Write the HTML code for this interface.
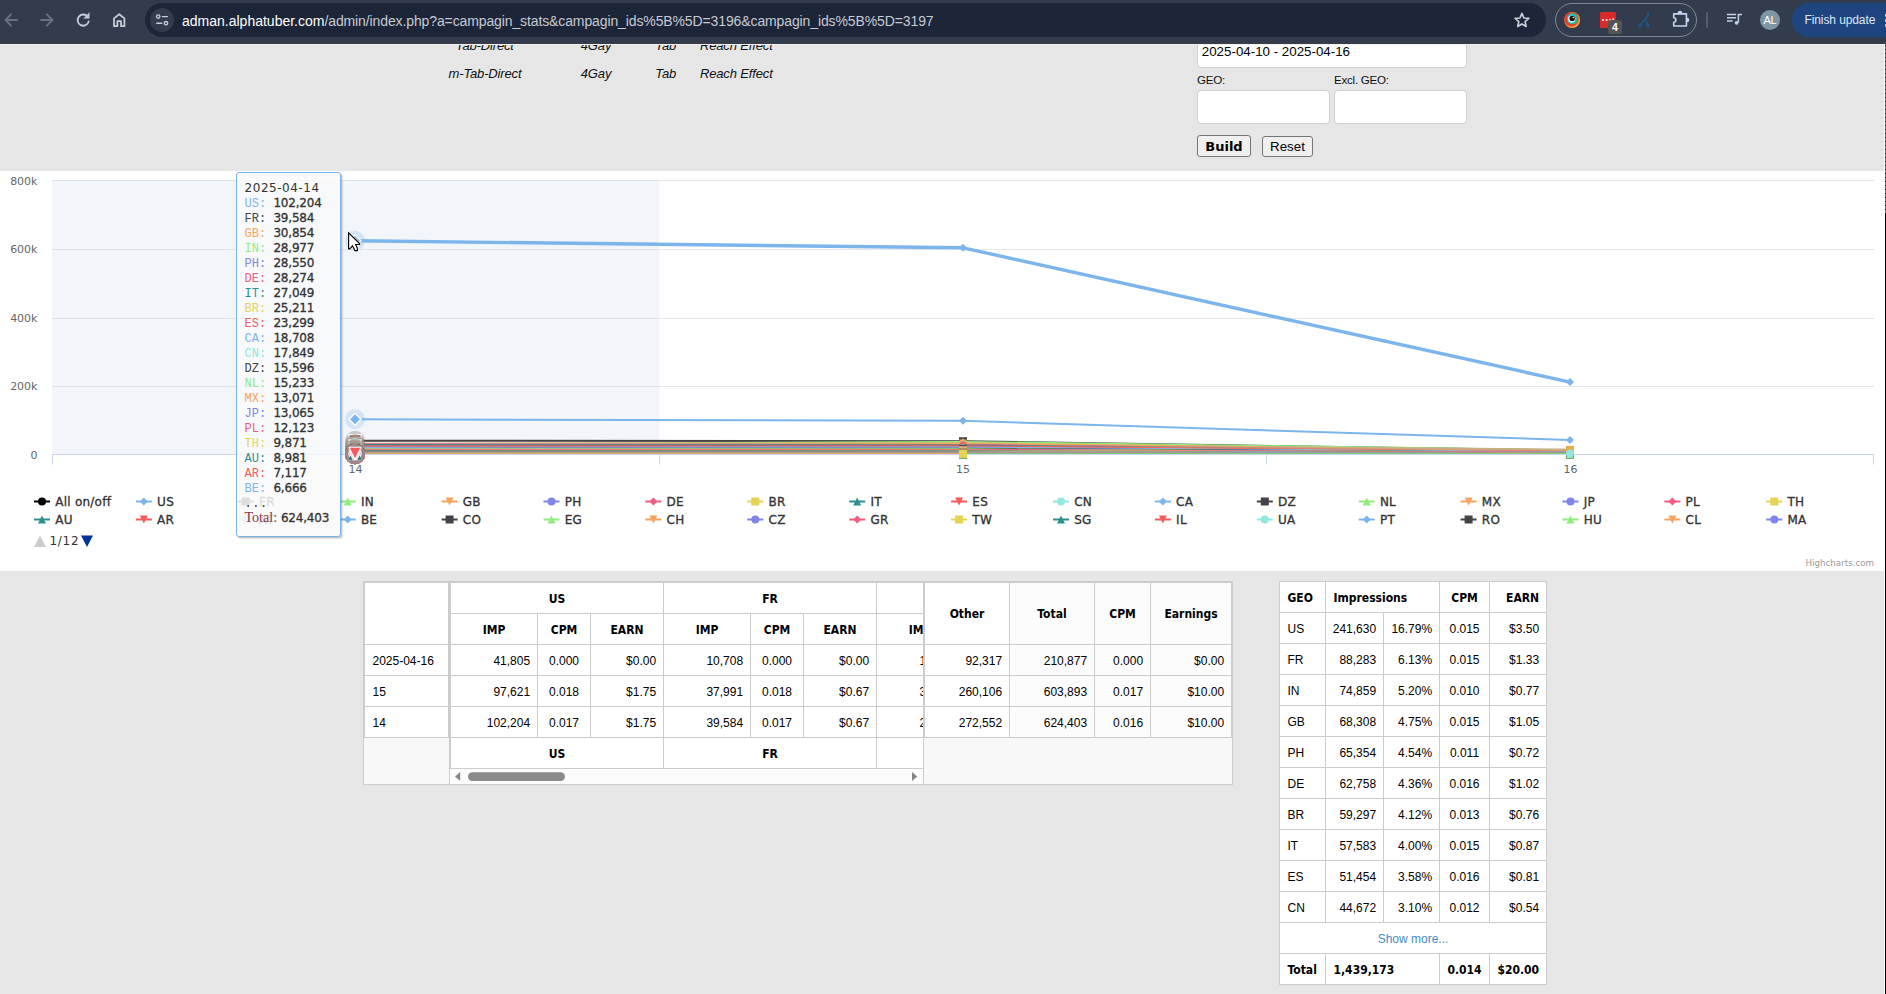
<!DOCTYPE html>
<html lang="en">
<head>
<meta charset="utf-8">
<title>Campaign stats</title>
<style>
html,body{margin:0;padding:0;}
body{width:1886px;height:994px;overflow:hidden;position:relative;background:#e6e6e6;font-family:"Liberation Sans",sans-serif;font-size:12px;color:#000;}
.abs{position:absolute;}
/* ---------- browser toolbar ---------- */
#tb{position:absolute;left:0;top:0;width:1886px;height:44px;background:#333c4c;z-index:50;}
#tb .line{position:absolute;left:0;top:43px;width:1886px;height:1px;background:#3a3d48;}
#url{position:absolute;left:145px;top:3px;width:1401px;height:34px;border-radius:17px;background:#1d2538;}
#tune{position:absolute;left:5px;top:5px;width:24px;height:24px;border-radius:12px;background:#333c4c;}
#urltxt{position:absolute;left:37px;top:0.7px;height:34px;line-height:34px;font-size:14px;color:#c6cad3;white-space:nowrap;letter-spacing:-0.115px;}
#urltxt b{font-weight:normal;color:#ffffff;letter-spacing:0;}
#extg{position:absolute;left:1555px;top:3px;width:140px;height:32px;border:1px solid #828791;border-radius:17px;}
#fin{position:absolute;left:1792px;top:3px;width:120px;height:34px;border-radius:17px;background:#1f4580;color:#dde6f6;font-size:12px;line-height:34px;letter-spacing:-0.1px;}
#fin span{position:absolute;left:12.5px;top:-0.2px;white-space:nowrap;}
#av{position:absolute;left:1760px;top:10px;width:20px;height:20px;border-radius:10px;background:#7e97a4;color:#fff;font-size:11px;line-height:20px;text-align:center;letter-spacing:-0.3px;}
/* ---------- page header ---------- */
.it{position:absolute;font-style:italic;font-size:13px;letter-spacing:-0.15px;line-height:16px;color:#111;white-space:nowrap;transform:translateX(-50%);}
.inp{position:absolute;background:#fff;border:1px solid #cfcfcf;border-radius:4px;box-sizing:border-box;}
.lbl{position:absolute;font-size:11.6px;letter-spacing:-0.25px;line-height:14px;color:#111;white-space:nowrap;}
.btn{position:absolute;box-sizing:border-box;border:1px solid #767676;border-radius:3px;background:#efefef;text-align:center;white-space:nowrap;color:#000;}
/* ---------- chart ---------- */
#chart{position:absolute;left:0;top:171px;width:1884px;height:400px;background:#fff;overflow:hidden;}
#chart svg{position:absolute;left:0;top:0;}
.lg{font-family:"DejaVu Sans","Liberation Sans",sans-serif;font-size:12px;fill:#333333;stroke:#333333;stroke-width:0.32px;letter-spacing:0.25px;}
.nav{font-family:"DejaVu Sans","Liberation Sans",sans-serif;font-size:12px;fill:#333333;letter-spacing:0.7px;}
.axl{font-family:"DejaVu Sans","Liberation Sans",sans-serif;font-size:11px;fill:#666666;}
.cred{font-family:"DejaVu Sans","Liberation Sans",sans-serif;font-size:8.7px;fill:#999999;}
/* ---------- tooltip ---------- */
#tt{position:absolute;left:236px;top:172px;width:103px;height:363px;border:1px solid #7cb5ec;border-radius:3px;background:rgba(249,249,249,0.85);box-shadow:1px 1px 1px rgba(0,0,0,0.18),2px 2px 2px rgba(0,0,0,0.10);z-index:20;font-family:"DejaVu Sans","Liberation Sans",sans-serif;font-size:12px;color:#333333;}
#tt .in{position:absolute;left:7.6px;top:7.6px;}
.tr{height:15px;line-height:15px;white-space:pre;}
.tr b{font-weight:normal;-webkit-text-stroke:0.3px #333333;letter-spacing:-0.2px;}
.tr.d{letter-spacing:0.52px;}
.mono{font-family:"Liberation Mono",monospace;font-size:12px;}
.ser{font-family:"Liberation Serif",serif;font-size:14.1px;color:#8b3548;}
.tr.tot{position:relative;top:-1px;left:-0.2px;}
/* ---------- tables ---------- */
.r{position:absolute;}
.c{position:absolute;box-sizing:border-box;font-family:"Liberation Sans",sans-serif;font-size:12px;color:#000;white-space:nowrap;}
.c.b{font-family:"DejaVu Sans Condensed","Liberation Sans",sans-serif;font-weight:bold;}
.c.lnk{color:#428bca;}
</style>
</head>
<body>

<!-- ================= browser toolbar ================= -->
<div id="tb">
  <div class="line"></div>
  <svg class="abs" style="left:0;top:0" width="140" height="44" viewBox="0 0 140 44" fill="none" stroke-linecap="round" stroke-linejoin="round">
    <!-- back -->
    <path d="M17 20H6M11 14.5L5.5 20L11 25.5" stroke="#697080" stroke-width="1.8"/>
    <!-- forward -->
    <path d="M41 20H52M47 14.5L52.5 20L47 25.5" stroke="#697080" stroke-width="1.8"/>
    <!-- reload -->
    <path d="M87.6 16.6A5.6 5.6 0 1 0 88.7 21.4" stroke="#c6cbd6" stroke-width="1.8"/>
    <path d="M89.2 13.2V18.2H84.2Z" fill="#c6cbd6" stroke="#c6cbd6" stroke-width="0.6"/>
    <!-- home -->
    <path d="M114 26.2V18.4L119.2 14.2L124.4 18.4V26.2H121V21.2H117.4V26.2Z" stroke="#c6cbd6" stroke-width="1.8"/>
  </svg>
  <div id="url">
    <div id="tune"></div>
    <svg class="abs" style="left:5px;top:5px" width="24" height="24" viewBox="0 0 24 24" fill="none" stroke="#c6cbd6" stroke-width="1.4" stroke-linecap="round">
      <circle cx="8.2" cy="8.6" r="1.7"/><path d="M12.4 8.6H17.4"/>
      <circle cx="16" cy="15.2" r="1.7"/><path d="M6.8 15.2H11.8"/>
    </svg>
    <div id="urltxt"><b>adman.alphatuber.com</b>/admin/index.php?a=campagin_stats&amp;campagin_ids%5B%5D=3196&amp;campagin_ids%5B%5D=3197</div>
    <!-- star -->
    <svg class="abs" style="left:1368px;top:8px" width="18" height="18" viewBox="0 0 18 18" fill="none" stroke="#c8ccd6" stroke-width="1.7" stroke-linejoin="round">
      <path d="M8.95 2.45L10.89 6.98L15.80 7.43L12.09 10.67L13.18 15.47L8.95 12.95L4.72 15.47L5.81 10.67L2.10 7.43L7.01 6.98Z"/>
    </svg>
  </div>
  <div id="extg"></div>
  <!-- extension icons -->
  <svg class="abs" style="left:1556px;top:4px" width="140" height="34" viewBox="0 0 140 34">
    <!-- browserstack-like eye -->
    <defs><linearGradient id="eg" x1="0" y1="0" x2="1" y2="1"><stop offset="0" stop-color="#ee6a2e"/><stop offset="1" stop-color="#fbb040"/></linearGradient></defs>
    <circle cx="16.1" cy="16.0" r="8" fill="url(#eg)"/>
    <circle cx="15.5" cy="15.3" r="7.1" fill="#e73c2e"/>
    <circle cx="16.5" cy="14.7" r="5.7" fill="#3fb54a"/>
    <circle cx="15.9" cy="14.8" r="4.8" fill="#23b5e8"/>
    <circle cx="15.6" cy="15.1" r="3.7" fill="#c7ecf8"/>
    <circle cx="16.2" cy="14.4" r="2.65" fill="#230b06"/>
    <circle cx="17.2" cy="13.5" r="0.75" fill="#ffffff"/>
    <!-- red ext -->
    <rect x="44" y="8" width="16" height="16" rx="1.5" fill="#d92a2a"/>
    <circle cx="47" cy="16" r="1" fill="#fff"/><circle cx="50.6" cy="16" r="1" fill="#fff"/><circle cx="54" cy="16" r="1" fill="#fff"/><rect x="56.6" y="14" width="1.2" height="3" fill="#fff"/>
    <rect x="52" y="16" width="14" height="14" rx="3" fill="#555555"/>
    <text x="59" y="27.3" text-anchor="middle" font-family="Liberation Sans, sans-serif" font-weight="bold" font-size="10.5" fill="#ffffff">4</text>
    <!-- split icon -->
    <path d="M92.2 8.8V10.6C92.2 12.8 91 13.6 84.6 20" fill="none" stroke="#1d5a80" stroke-width="1.7" stroke-linecap="round"/>
    <path d="M90.2 17.6L91.8 20.8" fill="none" stroke="#1d5a80" stroke-width="1.7" stroke-linecap="round"/>
    <path d="M81.4 20.6H86.6L84 24Z M89.2 20.6H94.4L91.8 24Z" fill="#1d5a80"/>
    <!-- puzzle -->
    <path d="M117.7 9.9H130.4V22H117.7V18.2C120.6 18.2 120.6 13.8 117.7 13.8Z" fill="none" stroke="#c5d3ee" stroke-width="1.6" stroke-linejoin="round"/>
    <path d="M121.6 9.4A2.4 2.6 0 0 1 126.4 9.4Z M130.9 13.8A2.4 2.3 0 0 1 130.9 18.4Z" fill="#c5d3ee"/>
  </svg>
  <div class="abs" style="left:1706px;top:12px;width:2px;height:16px;border-radius:1px;background:#565d6e;"></div>
  <!-- media icon -->
  <svg class="abs" style="left:1725px;top:11px" width="20" height="18" viewBox="0 0 20 18" fill="none" stroke="#c5cfe6" stroke-width="1.5">
    <path d="M2 3.6H11M2 6.8H11M2 10H7.6"/>
    <path d="M13.4 11.6V3.4H17"/>
    <circle cx="11.6" cy="11.8" r="1.9" fill="#c5cfe6" stroke="none"/>
  </svg>
  <div id="av">AL</div>
  <div id="fin"><span>Finish update</span></div>
  <div class="abs" style="left:1884.5px;top:14px;width:3px;height:3px;border-radius:2px;background:#dde6f6;"></div>
  <div class="abs" style="left:1884.5px;top:19px;width:3px;height:3px;border-radius:2px;background:#dde6f6;"></div>
  <div class="abs" style="left:1884.5px;top:24px;width:3px;height:3px;border-radius:2px;background:#dde6f6;"></div>
</div>

<!-- ================= page header bits ================= -->
<div class="it" style="left:484.8px;top:37.5px;">Tab-Direct</div>
<div class="it" style="left:596px;top:37.5px;">4Gay</div>
<div class="it" style="left:665.7px;top:37.5px;">Tab</div>
<div class="it" style="left:736.3px;top:37.5px;">Reach Effect</div>
<div class="it" style="left:485px;top:65.5px;">m-Tab-Direct</div>
<div class="it" style="left:596px;top:65.5px;">4Gay</div>
<div class="it" style="left:665.7px;top:65.5px;">Tab</div>
<div class="it" style="left:736.3px;top:65.5px;">Reach Effect</div>

<div class="inp" style="left:1197px;top:35px;width:270px;height:33px;"><span class="abs" style="left:3.8px;top:8px;font-size:13.33px;line-height:15px;white-space:nowrap;">2025-04-10 - 2025-04-16</span></div>
<div class="lbl" style="left:1197px;top:72.5px;">GEO:</div>
<div class="lbl" style="left:1334px;top:72.5px;">Excl. GEO:</div>
<div class="inp" style="left:1197px;top:90px;width:133px;height:34px;"></div>
<div class="inp" style="left:1334px;top:90px;width:133px;height:34px;"></div>
<div class="btn" style="left:1197px;top:135px;width:54px;height:22px;font-family:'DejaVu Sans','Liberation Sans',sans-serif;font-weight:bold;font-size:13px;line-height:22px;">Build</div>
<div class="btn" style="left:1262px;top:136px;width:51px;height:21px;font-size:13.33px;line-height:19px;">Reset</div>

<!-- ================= chart ================= -->
<div id="chart">
<svg width="1884" height="400" viewBox="0 0 1884 400">
<defs><clipPath id="pc"><rect x="0" y="9" width="1884" height="274"/></clipPath></defs>
<path d="M52 9.5H1874" stroke="#e6e6e6" stroke-width="1"/>
<path d="M52 78.5H1874" stroke="#e6e6e6" stroke-width="1"/>
<path d="M52 147.5H1874" stroke="#e6e6e6" stroke-width="1"/>
<path d="M52 215.5H1874" stroke="#e6e6e6" stroke-width="1"/>
<rect x="52" y="9" width="607.3" height="274" fill="rgba(204,214,235,0.25)"/>
<path d="M52 283.5H1874" stroke="#ccd6eb" stroke-width="1"/>
<path d="M52.5 283.5V293.5" stroke="#ccd6eb" stroke-width="1"/>
<path d="M659.5 283.5V293.5" stroke="#ccd6eb" stroke-width="1"/>
<path d="M1266.5 283.5V293.5" stroke="#ccd6eb" stroke-width="1"/>
<path d="M1873.5 283.5V293.5" stroke="#ccd6eb" stroke-width="1"/>
<path clip-path="url(#pc)" d="M355.0 248.3 L963.0 249.8 L1570.0 268.9" fill="none" stroke="#7cb5ec" stroke-width="2" stroke-linejoin="round" stroke-linecap="round"/>
<circle cx="355.0" cy="248.3" r="10" fill="#7cb5ec" fill-opacity="0.25"/>
<path d="M355.0 242.3L361.0 248.3L355.0 254.3L349.0 248.3Z" fill="#7cb5ec" stroke="#ffffff" stroke-width="1.3"/>
<path d="M963.0 245.8L967.0 249.8L963.0 253.8L959.0 249.8Z" fill="#7cb5ec"/>
<path d="M1570.0 264.9L1574.0 268.9L1570.0 272.9L1566.0 268.9Z" fill="#7cb5ec"/>
<path clip-path="url(#pc)" d="M355.0 269.7 L963.0 270.2 L1570.0 279.5" fill="none" stroke="#434348" stroke-width="2" stroke-linejoin="round" stroke-linecap="round"/>
<circle cx="355.0" cy="269.7" r="10" fill="#434348" fill-opacity="0.25"/>
<path d="M349.0 263.7L361.0 263.7L361.0 275.7L349.0 275.7Z" fill="#434348" stroke="#ffffff" stroke-width="1.3"/>
<path d="M959.0 266.2L967.0 266.2L967.0 274.2L959.0 274.2Z" fill="#434348"/>
<path d="M1566.0 275.5L1574.0 275.5L1574.0 283.5L1566.0 283.5Z" fill="#434348"/>
<path clip-path="url(#pc)" d="M355.0 273.3 L963.0 270.9 L1570.0 279.2" fill="none" stroke="#90ed7d" stroke-width="2" stroke-linejoin="round" stroke-linecap="round"/>
<circle cx="355.0" cy="273.3" r="10" fill="#90ed7d" fill-opacity="0.25"/>
<path d="M355.0 267.3L361.0 279.3L349.0 279.3Z" fill="#90ed7d" stroke="#ffffff" stroke-width="1.3"/>
<path d="M963.0 266.9L967.0 274.9L959.0 274.9Z" fill="#90ed7d"/>
<path d="M1570.0 275.2L1574.0 283.2L1566.0 283.2Z" fill="#90ed7d"/>
<path clip-path="url(#pc)" d="M355.0 272.7 L963.0 272.4 L1570.0 279.9" fill="none" stroke="#f7a35c" stroke-width="2" stroke-linejoin="round" stroke-linecap="round"/>
<circle cx="355.0" cy="272.7" r="10" fill="#f7a35c" fill-opacity="0.25"/>
<path d="M349.0 266.7L361.0 266.7L355.0 278.7Z" fill="#f7a35c" stroke="#ffffff" stroke-width="1.3"/>
<path d="M959.0 268.4L967.0 268.4L963.0 276.4Z" fill="#f7a35c"/>
<path d="M1566.0 275.9L1574.0 275.9L1570.0 283.9Z" fill="#f7a35c"/>
<path clip-path="url(#pc)" d="M355.0 273.4 L963.0 274.1 L1570.0 280.3" fill="none" stroke="#8085e9" stroke-width="2" stroke-linejoin="round" stroke-linecap="round"/>
<circle cx="355.0" cy="273.4" r="10" fill="#8085e9" fill-opacity="0.25"/>
<circle cx="355.0" cy="273.4" r="6" fill="#8085e9" stroke="#ffffff" stroke-width="1.3"/>
<circle cx="963.0" cy="274.1" r="4" fill="#8085e9"/>
<circle cx="1570.0" cy="280.3" r="4" fill="#8085e9"/>
<path clip-path="url(#pc)" d="M355.0 273.5 L963.0 274.1 L1570.0 280.9" fill="none" stroke="#f15c80" stroke-width="2" stroke-linejoin="round" stroke-linecap="round"/>
<circle cx="355.0" cy="273.5" r="10" fill="#f15c80" fill-opacity="0.25"/>
<path d="M355.0 267.5L361.0 273.5L355.0 279.5L349.0 273.5Z" fill="#f15c80" stroke="#ffffff" stroke-width="1.3"/>
<path d="M963.0 270.1L967.0 274.1L963.0 278.1L959.0 274.1Z" fill="#f15c80"/>
<path d="M1570.0 276.9L1574.0 280.9L1570.0 284.9L1566.0 280.9Z" fill="#f15c80"/>
<path clip-path="url(#pc)" d="M355.0 274.6 L963.0 274.7 L1570.0 280.0" fill="none" stroke="#e4d354" stroke-width="2" stroke-linejoin="round" stroke-linecap="round"/>
<circle cx="355.0" cy="274.6" r="10" fill="#e4d354" fill-opacity="0.25"/>
<path d="M349.0 268.6L361.0 268.6L361.0 280.6L349.0 280.6Z" fill="#e4d354" stroke="#ffffff" stroke-width="1.3"/>
<path d="M959.0 270.7L967.0 270.7L967.0 278.7L959.0 278.7Z" fill="#e4d354"/>
<path d="M1566.0 276.0L1574.0 276.0L1574.0 284.0L1566.0 284.0Z" fill="#e4d354"/>
<path clip-path="url(#pc)" d="M355.0 274.0 L963.0 274.5 L1570.0 280.8" fill="none" stroke="#2b908f" stroke-width="2" stroke-linejoin="round" stroke-linecap="round"/>
<circle cx="355.0" cy="274.0" r="10" fill="#2b908f" fill-opacity="0.25"/>
<path d="M355.0 268.0L361.0 280.0L349.0 280.0Z" fill="#2b908f" stroke="#ffffff" stroke-width="1.3"/>
<path d="M963.0 270.5L967.0 278.5L959.0 278.5Z" fill="#2b908f"/>
<path d="M1570.0 276.8L1574.0 284.8L1566.0 284.8Z" fill="#2b908f"/>
<path clip-path="url(#pc)" d="M355.0 275.2 L963.0 275.2 L1570.0 280.1" fill="none" stroke="#f45b5b" stroke-width="2" stroke-linejoin="round" stroke-linecap="round"/>
<circle cx="355.0" cy="275.2" r="10" fill="#f45b5b" fill-opacity="0.25"/>
<path d="M349.0 269.2L361.0 269.2L355.0 281.2Z" fill="#f45b5b" stroke="#ffffff" stroke-width="1.3"/>
<path d="M959.0 271.2L967.0 271.2L963.0 279.2Z" fill="#f45b5b"/>
<path d="M1566.0 276.1L1574.0 276.1L1570.0 284.1Z" fill="#f45b5b"/>
<path clip-path="url(#pc)" d="M355.0 277.1 L963.0 277.1 L1570.0 281.4" fill="none" stroke="#91e8e1" stroke-width="2" stroke-linejoin="round" stroke-linecap="round"/>
<circle cx="355.0" cy="277.1" r="10" fill="#91e8e1" fill-opacity="0.25"/>
<circle cx="355.0" cy="277.1" r="6" fill="#91e8e1" stroke="#ffffff" stroke-width="1.3"/>
<circle cx="963.0" cy="277.1" r="4" fill="#91e8e1"/>
<circle cx="1570.0" cy="281.4" r="4" fill="#91e8e1"/>
<path clip-path="url(#pc)" d="M355.0 276.8 L963.0 276.5 L1570.0 281.7" fill="none" stroke="#7cb5ec" stroke-width="2" stroke-linejoin="round" stroke-linecap="round"/>
<circle cx="355.0" cy="276.8" r="10" fill="#7cb5ec" fill-opacity="0.25"/>
<path d="M355.0 270.8L361.0 276.8L355.0 282.8L349.0 276.8Z" fill="#7cb5ec" stroke="#ffffff" stroke-width="1.3"/>
<path d="M963.0 272.5L967.0 276.5L963.0 280.5L959.0 276.5Z" fill="#7cb5ec"/>
<path d="M1570.0 277.7L1574.0 281.7L1570.0 285.7L1566.0 281.7Z" fill="#7cb5ec"/>
<path clip-path="url(#pc)" d="M355.0 277.9 L963.0 277.7 L1570.0 281.7" fill="none" stroke="#434348" stroke-width="2" stroke-linejoin="round" stroke-linecap="round"/>
<circle cx="355.0" cy="277.9" r="10" fill="#434348" fill-opacity="0.25"/>
<path d="M349.0 271.9L361.0 271.9L361.0 283.9L349.0 283.9Z" fill="#434348" stroke="#ffffff" stroke-width="1.3"/>
<path d="M959.0 273.7L967.0 273.7L967.0 281.7L959.0 281.7Z" fill="#434348"/>
<path d="M1566.0 277.7L1574.0 277.7L1574.0 285.7L1566.0 285.7Z" fill="#434348"/>
<path clip-path="url(#pc)" d="M355.0 278.0 L963.0 278.3 L1570.0 281.9" fill="none" stroke="#90ed7d" stroke-width="2" stroke-linejoin="round" stroke-linecap="round"/>
<circle cx="355.0" cy="278.0" r="10" fill="#90ed7d" fill-opacity="0.25"/>
<path d="M355.0 272.0L361.0 284.0L349.0 284.0Z" fill="#90ed7d" stroke="#ffffff" stroke-width="1.3"/>
<path d="M963.0 274.3L967.0 282.3L959.0 282.3Z" fill="#90ed7d"/>
<path d="M1570.0 277.9L1574.0 285.9L1566.0 285.9Z" fill="#90ed7d"/>
<path clip-path="url(#pc)" d="M355.0 278.7 L963.0 278.9 L1570.0 281.6" fill="none" stroke="#f7a35c" stroke-width="2" stroke-linejoin="round" stroke-linecap="round"/>
<circle cx="355.0" cy="278.7" r="10" fill="#f7a35c" fill-opacity="0.25"/>
<path d="M349.0 272.7L361.0 272.7L355.0 284.7Z" fill="#f7a35c" stroke="#ffffff" stroke-width="1.3"/>
<path d="M959.0 274.9L967.0 274.9L963.0 282.9Z" fill="#f7a35c"/>
<path d="M1566.0 277.6L1574.0 277.6L1570.0 285.6Z" fill="#f7a35c"/>
<path clip-path="url(#pc)" d="M355.0 278.7 L963.0 279.0 L1570.0 281.8" fill="none" stroke="#8085e9" stroke-width="2" stroke-linejoin="round" stroke-linecap="round"/>
<circle cx="355.0" cy="278.7" r="10" fill="#8085e9" fill-opacity="0.25"/>
<circle cx="355.0" cy="278.7" r="6" fill="#8085e9" stroke="#ffffff" stroke-width="1.3"/>
<circle cx="963.0" cy="279.0" r="4" fill="#8085e9"/>
<circle cx="1570.0" cy="281.8" r="4" fill="#8085e9"/>
<path clip-path="url(#pc)" d="M355.0 279.1 L963.0 279.0 L1570.0 282.0" fill="none" stroke="#f15c80" stroke-width="2" stroke-linejoin="round" stroke-linecap="round"/>
<circle cx="355.0" cy="279.1" r="10" fill="#f15c80" fill-opacity="0.25"/>
<path d="M355.0 273.1L361.0 279.1L355.0 285.1L349.0 279.1Z" fill="#f15c80" stroke="#ffffff" stroke-width="1.3"/>
<path d="M963.0 275.0L967.0 279.0L963.0 283.0L959.0 279.0Z" fill="#f15c80"/>
<path d="M1570.0 278.0L1574.0 282.0L1570.0 286.0L1566.0 282.0Z" fill="#f15c80"/>
<path clip-path="url(#pc)" d="M355.0 279.8 L963.0 279.8 L1570.0 282.4" fill="none" stroke="#e4d354" stroke-width="2" stroke-linejoin="round" stroke-linecap="round"/>
<circle cx="355.0" cy="279.8" r="10" fill="#e4d354" fill-opacity="0.25"/>
<path d="M349.0 273.8L361.0 273.8L361.0 285.8L349.0 285.8Z" fill="#e4d354" stroke="#ffffff" stroke-width="1.3"/>
<path d="M959.0 275.8L967.0 275.8L967.0 283.8L959.0 283.8Z" fill="#e4d354"/>
<path d="M1566.0 278.4L1574.0 278.4L1574.0 286.4L1566.0 286.4Z" fill="#e4d354"/>
<path clip-path="url(#pc)" d="M355.0 280.1 L963.0 280.3 L1570.0 282.4" fill="none" stroke="#2b908f" stroke-width="2" stroke-linejoin="round" stroke-linecap="round"/>
<circle cx="355.0" cy="280.1" r="10" fill="#2b908f" fill-opacity="0.25"/>
<path d="M355.0 274.1L361.0 286.1L349.0 286.1Z" fill="#2b908f" stroke="#ffffff" stroke-width="1.3"/>
<path d="M963.0 276.3L967.0 284.3L959.0 284.3Z" fill="#2b908f"/>
<path d="M1570.0 278.4L1574.0 286.4L1566.0 286.4Z" fill="#2b908f"/>
<path clip-path="url(#pc)" d="M355.0 280.8 L963.0 280.7 L1570.0 282.5" fill="none" stroke="#f45b5b" stroke-width="2" stroke-linejoin="round" stroke-linecap="round"/>
<circle cx="355.0" cy="280.8" r="10" fill="#f45b5b" fill-opacity="0.25"/>
<path d="M349.0 274.8L361.0 274.8L355.0 286.8Z" fill="#f45b5b" stroke="#ffffff" stroke-width="1.3"/>
<path d="M959.0 276.7L967.0 276.7L963.0 284.7Z" fill="#f45b5b"/>
<path d="M1566.0 278.5L1574.0 278.5L1570.0 286.5Z" fill="#f45b5b"/>
<path clip-path="url(#pc)" d="M355.0 281.0 L963.0 281.1 L1570.0 282.5" fill="none" stroke="#91e8e1" stroke-width="2" stroke-linejoin="round" stroke-linecap="round"/>
<circle cx="355.0" cy="281.0" r="10" fill="#91e8e1" fill-opacity="0.25"/>
<circle cx="355.0" cy="281.0" r="6" fill="#91e8e1" stroke="#ffffff" stroke-width="1.3"/>
<circle cx="963.0" cy="281.1" r="4" fill="#91e8e1"/>
<circle cx="1570.0" cy="282.5" r="4" fill="#91e8e1"/>
<path clip-path="url(#pc)" d="M355.0 280.9 L963.0 281.0 L1570.0 282.6" fill="none" stroke="#7cb5ec" stroke-width="2" stroke-linejoin="round" stroke-linecap="round"/>
<circle cx="355.0" cy="280.9" r="10" fill="#7cb5ec" fill-opacity="0.25"/>
<path d="M355.0 274.9L361.0 280.9L355.0 286.9L349.0 280.9Z" fill="#7cb5ec" stroke="#ffffff" stroke-width="1.3"/>
<path d="M963.0 277.0L967.0 281.0L963.0 285.0L959.0 281.0Z" fill="#7cb5ec"/>
<path d="M1570.0 278.6L1574.0 282.6L1570.0 286.6L1566.0 282.6Z" fill="#7cb5ec"/>
<path clip-path="url(#pc)" d="M355.0 281.2 L963.0 281.1 L1570.0 282.7" fill="none" stroke="#434348" stroke-width="2" stroke-linejoin="round" stroke-linecap="round"/>
<circle cx="355.0" cy="281.2" r="10" fill="#434348" fill-opacity="0.25"/>
<path d="M349.0 275.2L361.0 275.2L361.0 287.2L349.0 287.2Z" fill="#434348" stroke="#ffffff" stroke-width="1.3"/>
<path d="M959.0 277.1L967.0 277.1L967.0 285.1L959.0 285.1Z" fill="#434348"/>
<path d="M1566.0 278.7L1574.0 278.7L1574.0 286.7L1566.0 286.7Z" fill="#434348"/>
<path clip-path="url(#pc)" d="M355.0 281.3 L963.0 281.3 L1570.0 282.5" fill="none" stroke="#90ed7d" stroke-width="2" stroke-linejoin="round" stroke-linecap="round"/>
<circle cx="355.0" cy="281.3" r="10" fill="#90ed7d" fill-opacity="0.25"/>
<path d="M355.0 275.3L361.0 287.3L349.0 287.3Z" fill="#90ed7d" stroke="#ffffff" stroke-width="1.3"/>
<path d="M963.0 277.3L967.0 285.3L959.0 285.3Z" fill="#90ed7d"/>
<path d="M1570.0 278.5L1574.0 286.5L1566.0 286.5Z" fill="#90ed7d"/>
<path clip-path="url(#pc)" d="M355.0 281.3 L963.0 281.4 L1570.0 282.5" fill="none" stroke="#f7a35c" stroke-width="2" stroke-linejoin="round" stroke-linecap="round"/>
<circle cx="355.0" cy="281.3" r="10" fill="#f7a35c" fill-opacity="0.25"/>
<path d="M349.0 275.3L361.0 275.3L355.0 287.3Z" fill="#f7a35c" stroke="#ffffff" stroke-width="1.3"/>
<path d="M959.0 277.4L967.0 277.4L963.0 285.4Z" fill="#f7a35c"/>
<path d="M1566.0 278.5L1574.0 278.5L1570.0 286.5Z" fill="#f7a35c"/>
<path clip-path="url(#pc)" d="M355.0 281.5 L963.0 281.5 L1570.0 282.6" fill="none" stroke="#8085e9" stroke-width="2" stroke-linejoin="round" stroke-linecap="round"/>
<circle cx="355.0" cy="281.5" r="10" fill="#8085e9" fill-opacity="0.25"/>
<circle cx="355.0" cy="281.5" r="6" fill="#8085e9" stroke="#ffffff" stroke-width="1.3"/>
<circle cx="963.0" cy="281.5" r="4" fill="#8085e9"/>
<circle cx="1570.0" cy="282.6" r="4" fill="#8085e9"/>
<path clip-path="url(#pc)" d="M355.0 281.5 L963.0 281.6 L1570.0 282.8" fill="none" stroke="#f15c80" stroke-width="2" stroke-linejoin="round" stroke-linecap="round"/>
<circle cx="355.0" cy="281.5" r="10" fill="#f15c80" fill-opacity="0.25"/>
<path d="M355.0 275.5L361.0 281.5L355.0 287.5L349.0 281.5Z" fill="#f15c80" stroke="#ffffff" stroke-width="1.3"/>
<path d="M963.0 277.6L967.0 281.6L963.0 285.6L959.0 281.6Z" fill="#f15c80"/>
<path d="M1570.0 278.8L1574.0 282.8L1570.0 286.8L1566.0 282.8Z" fill="#f15c80"/>
<path clip-path="url(#pc)" d="M355.0 281.5 L963.0 281.5 L1570.0 282.7" fill="none" stroke="#e4d354" stroke-width="2" stroke-linejoin="round" stroke-linecap="round"/>
<circle cx="355.0" cy="281.5" r="10" fill="#e4d354" fill-opacity="0.25"/>
<path d="M349.0 275.5L361.0 275.5L361.0 287.5L349.0 287.5Z" fill="#e4d354" stroke="#ffffff" stroke-width="1.3"/>
<path d="M959.0 277.5L967.0 277.5L967.0 285.5L959.0 285.5Z" fill="#e4d354"/>
<path d="M1566.0 278.7L1574.0 278.7L1574.0 286.7L1566.0 286.7Z" fill="#e4d354"/>
<path clip-path="url(#pc)" d="M355.0 281.6 L963.0 281.6 L1570.0 282.6" fill="none" stroke="#2b908f" stroke-width="2" stroke-linejoin="round" stroke-linecap="round"/>
<circle cx="355.0" cy="281.6" r="10" fill="#2b908f" fill-opacity="0.25"/>
<path d="M355.0 275.6L361.0 287.6L349.0 287.6Z" fill="#2b908f" stroke="#ffffff" stroke-width="1.3"/>
<path d="M963.0 277.6L967.0 285.6L959.0 285.6Z" fill="#2b908f"/>
<path d="M1570.0 278.6L1574.0 286.6L1566.0 286.6Z" fill="#2b908f"/>
<path clip-path="url(#pc)" d="M355.0 281.7 L963.0 281.7 L1570.0 282.7" fill="none" stroke="#f45b5b" stroke-width="2" stroke-linejoin="round" stroke-linecap="round"/>
<circle cx="355.0" cy="281.7" r="10" fill="#f45b5b" fill-opacity="0.25"/>
<path d="M349.0 275.7L361.0 275.7L355.0 287.7Z" fill="#f45b5b" stroke="#ffffff" stroke-width="1.3"/>
<path d="M959.0 277.7L967.0 277.7L963.0 285.7Z" fill="#f45b5b"/>
<path d="M1566.0 278.7L1574.0 278.7L1570.0 286.7Z" fill="#f45b5b"/>
<path clip-path="url(#pc)" d="M355.0 281.7 L963.0 281.6 L1570.0 282.7" fill="none" stroke="#91e8e1" stroke-width="2" stroke-linejoin="round" stroke-linecap="round"/>
<circle cx="355.0" cy="281.7" r="10" fill="#91e8e1" fill-opacity="0.25"/>
<circle cx="355.0" cy="281.7" r="6" fill="#91e8e1" stroke="#ffffff" stroke-width="1.3"/>
<circle cx="963.0" cy="281.6" r="4" fill="#91e8e1"/>
<circle cx="1570.0" cy="282.7" r="4" fill="#91e8e1"/>
<path clip-path="url(#pc)" d="M355.0 281.8 L963.0 281.9 L1570.0 282.7" fill="none" stroke="#7cb5ec" stroke-width="2" stroke-linejoin="round" stroke-linecap="round"/>
<circle cx="355.0" cy="281.8" r="10" fill="#7cb5ec" fill-opacity="0.25"/>
<path d="M355.0 275.8L361.0 281.8L355.0 287.8L349.0 281.8Z" fill="#7cb5ec" stroke="#ffffff" stroke-width="1.3"/>
<path d="M963.0 277.9L967.0 281.9L963.0 285.9L959.0 281.9Z" fill="#7cb5ec"/>
<path d="M1570.0 278.7L1574.0 282.7L1570.0 286.7L1566.0 282.7Z" fill="#7cb5ec"/>
<path clip-path="url(#pc)" d="M355.0 281.8 L963.0 281.8 L1570.0 282.7" fill="none" stroke="#434348" stroke-width="2" stroke-linejoin="round" stroke-linecap="round"/>
<circle cx="355.0" cy="281.8" r="10" fill="#434348" fill-opacity="0.25"/>
<path d="M349.0 275.8L361.0 275.8L361.0 287.8L349.0 287.8Z" fill="#434348" stroke="#ffffff" stroke-width="1.3"/>
<path d="M959.0 277.8L967.0 277.8L967.0 285.8L959.0 285.8Z" fill="#434348"/>
<path d="M1566.0 278.7L1574.0 278.7L1574.0 286.7L1566.0 286.7Z" fill="#434348"/>
<path clip-path="url(#pc)" d="M355.0 281.9 L963.0 281.9 L1570.0 282.8" fill="none" stroke="#90ed7d" stroke-width="2" stroke-linejoin="round" stroke-linecap="round"/>
<circle cx="355.0" cy="281.9" r="10" fill="#90ed7d" fill-opacity="0.25"/>
<path d="M355.0 275.9L361.0 287.9L349.0 287.9Z" fill="#90ed7d" stroke="#ffffff" stroke-width="1.3"/>
<path d="M963.0 277.9L967.0 285.9L959.0 285.9Z" fill="#90ed7d"/>
<path d="M1570.0 278.8L1574.0 286.8L1566.0 286.8Z" fill="#90ed7d"/>
<path clip-path="url(#pc)" d="M355.0 282.0 L963.0 282.0 L1570.0 282.9" fill="none" stroke="#f7a35c" stroke-width="2" stroke-linejoin="round" stroke-linecap="round"/>
<circle cx="355.0" cy="282.0" r="10" fill="#f7a35c" fill-opacity="0.25"/>
<path d="M349.0 276.0L361.0 276.0L355.0 288.0Z" fill="#f7a35c" stroke="#ffffff" stroke-width="1.3"/>
<path d="M959.0 278.0L967.0 278.0L963.0 286.0Z" fill="#f7a35c"/>
<path d="M1566.0 278.9L1574.0 278.9L1570.0 286.9Z" fill="#f7a35c"/>
<path clip-path="url(#pc)" d="M355.0 282.0 L963.0 282.1 L1570.0 282.8" fill="none" stroke="#8085e9" stroke-width="2" stroke-linejoin="round" stroke-linecap="round"/>
<circle cx="355.0" cy="282.0" r="10" fill="#8085e9" fill-opacity="0.25"/>
<circle cx="355.0" cy="282.0" r="6" fill="#8085e9" stroke="#ffffff" stroke-width="1.3"/>
<circle cx="963.0" cy="282.1" r="4" fill="#8085e9"/>
<circle cx="1570.0" cy="282.8" r="4" fill="#8085e9"/>
<path clip-path="url(#pc)" d="M355.0 282.1 L963.0 282.1 L1570.0 282.9" fill="none" stroke="#f15c80" stroke-width="2" stroke-linejoin="round" stroke-linecap="round"/>
<circle cx="355.0" cy="282.1" r="10" fill="#f15c80" fill-opacity="0.25"/>
<path d="M355.0 276.1L361.0 282.1L355.0 288.1L349.0 282.1Z" fill="#f15c80" stroke="#ffffff" stroke-width="1.3"/>
<path d="M963.0 278.1L967.0 282.1L963.0 286.1L959.0 282.1Z" fill="#f15c80"/>
<path d="M1570.0 278.9L1574.0 282.9L1570.0 286.9L1566.0 282.9Z" fill="#f15c80"/>
<path clip-path="url(#pc)" d="M355.0 282.1 L963.0 282.1 L1570.0 282.9" fill="none" stroke="#e4d354" stroke-width="2" stroke-linejoin="round" stroke-linecap="round"/>
<circle cx="355.0" cy="282.1" r="10" fill="#e4d354" fill-opacity="0.25"/>
<path d="M349.0 276.1L361.0 276.1L361.0 288.1L349.0 288.1Z" fill="#e4d354" stroke="#ffffff" stroke-width="1.3"/>
<path d="M959.0 278.1L967.0 278.1L967.0 286.1L959.0 286.1Z" fill="#e4d354"/>
<path d="M1566.0 278.9L1574.0 278.9L1574.0 286.9L1566.0 286.9Z" fill="#e4d354"/>
<path clip-path="url(#pc)" d="M355.0 282.1 L963.0 282.1 L1570.0 282.8" fill="none" stroke="#2b908f" stroke-width="2" stroke-linejoin="round" stroke-linecap="round"/>
<circle cx="355.0" cy="282.1" r="10" fill="#2b908f" fill-opacity="0.25"/>
<path d="M355.0 276.1L361.0 288.1L349.0 288.1Z" fill="#2b908f" stroke="#ffffff" stroke-width="1.3"/>
<path d="M963.0 278.1L967.0 286.1L959.0 286.1Z" fill="#2b908f"/>
<path d="M1570.0 278.8L1574.0 286.8L1566.0 286.8Z" fill="#2b908f"/>
<path clip-path="url(#pc)" d="M355.0 282.1 L963.0 282.2 L1570.0 282.9" fill="none" stroke="#f45b5b" stroke-width="2" stroke-linejoin="round" stroke-linecap="round"/>
<circle cx="355.0" cy="282.1" r="10" fill="#f45b5b" fill-opacity="0.25"/>
<path d="M349.0 276.1L361.0 276.1L355.0 288.1Z" fill="#f45b5b" stroke="#ffffff" stroke-width="1.3"/>
<path d="M959.0 278.2L967.0 278.2L963.0 286.2Z" fill="#f45b5b"/>
<path d="M1566.0 278.9L1574.0 278.9L1570.0 286.9Z" fill="#f45b5b"/>
<path clip-path="url(#pc)" d="M355.0 282.2 L963.0 282.2 L1570.0 282.8" fill="none" stroke="#91e8e1" stroke-width="2" stroke-linejoin="round" stroke-linecap="round"/>
<circle cx="355.0" cy="282.2" r="10" fill="#91e8e1" fill-opacity="0.25"/>
<circle cx="355.0" cy="282.2" r="6" fill="#91e8e1" stroke="#ffffff" stroke-width="1.3"/>
<circle cx="963.0" cy="282.2" r="4" fill="#91e8e1"/>
<circle cx="1570.0" cy="282.8" r="4" fill="#91e8e1"/>
<path clip-path="url(#pc)" d="M355.0 282.3 L963.0 282.3 L1570.0 283.0" fill="none" stroke="#7cb5ec" stroke-width="2" stroke-linejoin="round" stroke-linecap="round"/>
<circle cx="355.0" cy="282.3" r="10" fill="#7cb5ec" fill-opacity="0.25"/>
<path d="M355.0 276.3L361.0 282.3L355.0 288.3L349.0 282.3Z" fill="#7cb5ec" stroke="#ffffff" stroke-width="1.3"/>
<path d="M963.0 278.3L967.0 282.3L963.0 286.3L959.0 282.3Z" fill="#7cb5ec"/>
<path d="M1570.0 279.0L1574.0 283.0L1570.0 287.0L1566.0 283.0Z" fill="#7cb5ec"/>
<path clip-path="url(#pc)" d="M355.0 282.3 L963.0 282.3 L1570.0 282.9" fill="none" stroke="#434348" stroke-width="2" stroke-linejoin="round" stroke-linecap="round"/>
<circle cx="355.0" cy="282.3" r="10" fill="#434348" fill-opacity="0.25"/>
<path d="M349.0 276.3L361.0 276.3L361.0 288.3L349.0 288.3Z" fill="#434348" stroke="#ffffff" stroke-width="1.3"/>
<path d="M959.0 278.3L967.0 278.3L967.0 286.3L959.0 286.3Z" fill="#434348"/>
<path d="M1566.0 278.9L1574.0 278.9L1574.0 286.9L1566.0 286.9Z" fill="#434348"/>
<path clip-path="url(#pc)" d="M355.0 282.3 L963.0 282.4 L1570.0 282.9" fill="none" stroke="#90ed7d" stroke-width="2" stroke-linejoin="round" stroke-linecap="round"/>
<circle cx="355.0" cy="282.3" r="10" fill="#90ed7d" fill-opacity="0.25"/>
<path d="M355.0 276.3L361.0 288.3L349.0 288.3Z" fill="#90ed7d" stroke="#ffffff" stroke-width="1.3"/>
<path d="M963.0 278.4L967.0 286.4L959.0 286.4Z" fill="#90ed7d"/>
<path d="M1570.0 278.9L1574.0 286.9L1566.0 286.9Z" fill="#90ed7d"/>
<path clip-path="url(#pc)" d="M355.0 282.4 L963.0 282.4 L1570.0 282.9" fill="none" stroke="#f7a35c" stroke-width="2" stroke-linejoin="round" stroke-linecap="round"/>
<circle cx="355.0" cy="282.4" r="10" fill="#f7a35c" fill-opacity="0.25"/>
<path d="M349.0 276.4L361.0 276.4L355.0 288.4Z" fill="#f7a35c" stroke="#ffffff" stroke-width="1.3"/>
<path d="M959.0 278.4L967.0 278.4L963.0 286.4Z" fill="#f7a35c"/>
<path d="M1566.0 278.9L1574.0 278.9L1570.0 286.9Z" fill="#f7a35c"/>
<path clip-path="url(#pc)" d="M355.0 282.4 L963.0 282.4 L1570.0 282.9" fill="none" stroke="#8085e9" stroke-width="2" stroke-linejoin="round" stroke-linecap="round"/>
<circle cx="355.0" cy="282.4" r="10" fill="#8085e9" fill-opacity="0.25"/>
<circle cx="355.0" cy="282.4" r="6" fill="#8085e9" stroke="#ffffff" stroke-width="1.3"/>
<circle cx="963.0" cy="282.4" r="4" fill="#8085e9"/>
<circle cx="1570.0" cy="282.9" r="4" fill="#8085e9"/>
<path clip-path="url(#pc)" d="M355.0 282.4 L963.0 282.5 L1570.0 282.9" fill="none" stroke="#f15c80" stroke-width="2" stroke-linejoin="round" stroke-linecap="round"/>
<circle cx="355.0" cy="282.4" r="10" fill="#f15c80" fill-opacity="0.25"/>
<path d="M355.0 276.4L361.0 282.4L355.0 288.4L349.0 282.4Z" fill="#f15c80" stroke="#ffffff" stroke-width="1.3"/>
<path d="M963.0 278.5L967.0 282.5L963.0 286.5L959.0 282.5Z" fill="#f15c80"/>
<path d="M1570.0 278.9L1574.0 282.9L1570.0 286.9L1566.0 282.9Z" fill="#f15c80"/>
<path clip-path="url(#pc)" d="M355.0 282.4 L963.0 282.4 L1570.0 282.9" fill="none" stroke="#e4d354" stroke-width="2" stroke-linejoin="round" stroke-linecap="round"/>
<circle cx="355.0" cy="282.4" r="10" fill="#e4d354" fill-opacity="0.25"/>
<path d="M349.0 276.4L361.0 276.4L361.0 288.4L349.0 288.4Z" fill="#e4d354" stroke="#ffffff" stroke-width="1.3"/>
<path d="M959.0 278.4L967.0 278.4L967.0 286.4L959.0 286.4Z" fill="#e4d354"/>
<path d="M1566.0 278.9L1574.0 278.9L1574.0 286.9L1566.0 286.9Z" fill="#e4d354"/>
<path clip-path="url(#pc)" d="M355.0 282.5 L963.0 282.5 L1570.0 283.0" fill="none" stroke="#2b908f" stroke-width="2" stroke-linejoin="round" stroke-linecap="round"/>
<circle cx="355.0" cy="282.5" r="10" fill="#2b908f" fill-opacity="0.25"/>
<path d="M355.0 276.5L361.0 288.5L349.0 288.5Z" fill="#2b908f" stroke="#ffffff" stroke-width="1.3"/>
<path d="M963.0 278.5L967.0 286.5L959.0 286.5Z" fill="#2b908f"/>
<path d="M1570.0 279.0L1574.0 287.0L1566.0 287.0Z" fill="#2b908f"/>
<path clip-path="url(#pc)" d="M355.0 282.5 L963.0 282.5 L1570.0 283.0" fill="none" stroke="#f45b5b" stroke-width="2" stroke-linejoin="round" stroke-linecap="round"/>
<circle cx="355.0" cy="282.5" r="10" fill="#f45b5b" fill-opacity="0.25"/>
<path d="M349.0 276.5L361.0 276.5L355.0 288.5Z" fill="#f45b5b" stroke="#ffffff" stroke-width="1.3"/>
<path d="M959.0 278.5L967.0 278.5L963.0 286.5Z" fill="#f45b5b"/>
<path d="M1566.0 279.0L1574.0 279.0L1570.0 287.0Z" fill="#f45b5b"/>
<path clip-path="url(#pc)" d="M355.0 282.5 L963.0 282.6 L1570.0 283.0" fill="none" stroke="#91e8e1" stroke-width="2" stroke-linejoin="round" stroke-linecap="round"/>
<circle cx="355.0" cy="282.5" r="10" fill="#91e8e1" fill-opacity="0.25"/>
<circle cx="355.0" cy="282.5" r="6" fill="#91e8e1" stroke="#ffffff" stroke-width="1.3"/>
<circle cx="963.0" cy="282.6" r="4" fill="#91e8e1"/>
<circle cx="1570.0" cy="283.0" r="4" fill="#91e8e1"/>
<path clip-path="url(#pc)" d="M355.0 282.6 L963.0 282.6 L1570.0 283.0" fill="none" stroke="#7cb5ec" stroke-width="2" stroke-linejoin="round" stroke-linecap="round"/>
<circle cx="355.0" cy="282.6" r="10" fill="#7cb5ec" fill-opacity="0.25"/>
<path d="M355.0 276.6L361.0 282.6L355.0 288.6L349.0 282.6Z" fill="#7cb5ec" stroke="#ffffff" stroke-width="1.3"/>
<path d="M963.0 278.6L967.0 282.6L963.0 286.6L959.0 282.6Z" fill="#7cb5ec"/>
<path d="M1570.0 279.0L1574.0 283.0L1570.0 287.0L1566.0 283.0Z" fill="#7cb5ec"/>
<path clip-path="url(#pc)" d="M355.0 282.6 L963.0 282.6 L1570.0 283.1" fill="none" stroke="#434348" stroke-width="2" stroke-linejoin="round" stroke-linecap="round"/>
<circle cx="355.0" cy="282.6" r="10" fill="#434348" fill-opacity="0.25"/>
<path d="M349.0 276.6L361.0 276.6L361.0 288.6L349.0 288.6Z" fill="#434348" stroke="#ffffff" stroke-width="1.3"/>
<path d="M959.0 278.6L967.0 278.6L967.0 286.6L959.0 286.6Z" fill="#434348"/>
<path d="M1566.0 279.1L1574.0 279.1L1574.0 287.1L1566.0 287.1Z" fill="#434348"/>
<path clip-path="url(#pc)" d="M355.0 282.6 L963.0 282.6 L1570.0 283.0" fill="none" stroke="#90ed7d" stroke-width="2" stroke-linejoin="round" stroke-linecap="round"/>
<circle cx="355.0" cy="282.6" r="10" fill="#90ed7d" fill-opacity="0.25"/>
<path d="M355.0 276.6L361.0 288.6L349.0 288.6Z" fill="#90ed7d" stroke="#ffffff" stroke-width="1.3"/>
<path d="M963.0 278.6L967.0 286.6L959.0 286.6Z" fill="#90ed7d"/>
<path d="M1570.0 279.0L1574.0 287.0L1566.0 287.0Z" fill="#90ed7d"/>
<path clip-path="url(#pc)" d="M355.0 282.6 L963.0 282.6 L1570.0 283.0" fill="none" stroke="#f7a35c" stroke-width="2" stroke-linejoin="round" stroke-linecap="round"/>
<circle cx="355.0" cy="282.6" r="10" fill="#f7a35c" fill-opacity="0.25"/>
<path d="M349.0 276.6L361.0 276.6L355.0 288.6Z" fill="#f7a35c" stroke="#ffffff" stroke-width="1.3"/>
<path d="M959.0 278.6L967.0 278.6L963.0 286.6Z" fill="#f7a35c"/>
<path d="M1566.0 279.0L1574.0 279.0L1570.0 287.0Z" fill="#f7a35c"/>
<path clip-path="url(#pc)" d="M355.0 282.7 L963.0 282.6 L1570.0 283.0" fill="none" stroke="#8085e9" stroke-width="2" stroke-linejoin="round" stroke-linecap="round"/>
<circle cx="355.0" cy="282.7" r="10" fill="#8085e9" fill-opacity="0.25"/>
<circle cx="355.0" cy="282.7" r="6" fill="#8085e9" stroke="#ffffff" stroke-width="1.3"/>
<circle cx="963.0" cy="282.6" r="4" fill="#8085e9"/>
<circle cx="1570.0" cy="283.0" r="4" fill="#8085e9"/>
<path clip-path="url(#pc)" d="M355.0 282.7 L963.0 282.7 L1570.0 283.1" fill="none" stroke="#f15c80" stroke-width="2" stroke-linejoin="round" stroke-linecap="round"/>
<circle cx="355.0" cy="282.7" r="10" fill="#f15c80" fill-opacity="0.25"/>
<path d="M355.0 276.7L361.0 282.7L355.0 288.7L349.0 282.7Z" fill="#f15c80" stroke="#ffffff" stroke-width="1.3"/>
<path d="M963.0 278.7L967.0 282.7L963.0 286.7L959.0 282.7Z" fill="#f15c80"/>
<path d="M1570.0 279.1L1574.0 283.1L1570.0 287.1L1566.0 283.1Z" fill="#f15c80"/>
<path clip-path="url(#pc)" d="M355.0 282.7 L963.0 282.7 L1570.0 283.1" fill="none" stroke="#e4d354" stroke-width="2" stroke-linejoin="round" stroke-linecap="round"/>
<circle cx="355.0" cy="282.7" r="10" fill="#e4d354" fill-opacity="0.25"/>
<path d="M349.0 276.7L361.0 276.7L361.0 288.7L349.0 288.7Z" fill="#e4d354" stroke="#ffffff" stroke-width="1.3"/>
<path d="M959.0 278.7L967.0 278.7L967.0 286.7L959.0 286.7Z" fill="#e4d354"/>
<path d="M1566.0 279.1L1574.0 279.1L1574.0 287.1L1566.0 287.1Z" fill="#e4d354"/>
<path clip-path="url(#pc)" d="M355.0 282.7 L963.0 282.7 L1570.0 283.1" fill="none" stroke="#2b908f" stroke-width="2" stroke-linejoin="round" stroke-linecap="round"/>
<circle cx="355.0" cy="282.7" r="10" fill="#2b908f" fill-opacity="0.25"/>
<path d="M355.0 276.7L361.0 288.7L349.0 288.7Z" fill="#2b908f" stroke="#ffffff" stroke-width="1.3"/>
<path d="M963.0 278.7L967.0 286.7L959.0 286.7Z" fill="#2b908f"/>
<path d="M1570.0 279.1L1574.0 287.1L1566.0 287.1Z" fill="#2b908f"/>
<path clip-path="url(#pc)" d="M355.0 282.7 L963.0 282.7 L1570.0 283.1" fill="none" stroke="#f45b5b" stroke-width="2" stroke-linejoin="round" stroke-linecap="round"/>
<circle cx="355.0" cy="282.7" r="10" fill="#f45b5b" fill-opacity="0.25"/>
<path d="M349.0 276.7L361.0 276.7L355.0 288.7Z" fill="#f45b5b" stroke="#ffffff" stroke-width="1.3"/>
<path d="M959.0 278.7L967.0 278.7L963.0 286.7Z" fill="#f45b5b"/>
<path d="M1566.0 279.1L1574.0 279.1L1570.0 287.1Z" fill="#f45b5b"/>
<path clip-path="url(#pc)" d="M355.0 282.7 L963.0 282.8 L1570.0 283.1" fill="none" stroke="#91e8e1" stroke-width="2" stroke-linejoin="round" stroke-linecap="round"/>
<circle cx="355.0" cy="282.7" r="10" fill="#91e8e1" fill-opacity="0.25"/>
<circle cx="355.0" cy="282.7" r="6" fill="#91e8e1" stroke="#ffffff" stroke-width="1.3"/>
<circle cx="963.0" cy="282.8" r="4" fill="#91e8e1"/>
<circle cx="1570.0" cy="283.1" r="4" fill="#91e8e1"/>
<path clip-path="url(#pc)" d="M355.0 282.7 L963.0 282.7 L1570.0 283.0" fill="none" stroke="#7cb5ec" stroke-width="2" stroke-linejoin="round" stroke-linecap="round"/>
<circle cx="355.0" cy="282.7" r="10" fill="#7cb5ec" fill-opacity="0.25"/>
<path d="M355.0 276.7L361.0 282.7L355.0 288.7L349.0 282.7Z" fill="#7cb5ec" stroke="#ffffff" stroke-width="1.3"/>
<path d="M963.0 278.7L967.0 282.7L963.0 286.7L959.0 282.7Z" fill="#7cb5ec"/>
<path d="M1570.0 279.0L1574.0 283.0L1570.0 287.0L1566.0 283.0Z" fill="#7cb5ec"/>
<path clip-path="url(#pc)" d="M355.0 282.8 L963.0 282.8 L1570.0 283.1" fill="none" stroke="#434348" stroke-width="2" stroke-linejoin="round" stroke-linecap="round"/>
<circle cx="355.0" cy="282.8" r="10" fill="#434348" fill-opacity="0.25"/>
<path d="M349.0 276.8L361.0 276.8L361.0 288.8L349.0 288.8Z" fill="#434348" stroke="#ffffff" stroke-width="1.3"/>
<path d="M959.0 278.8L967.0 278.8L967.0 286.8L959.0 286.8Z" fill="#434348"/>
<path d="M1566.0 279.1L1574.0 279.1L1574.0 287.1L1566.0 287.1Z" fill="#434348"/>
<path clip-path="url(#pc)" d="M355.0 282.8 L963.0 282.8 L1570.0 283.1" fill="none" stroke="#90ed7d" stroke-width="2" stroke-linejoin="round" stroke-linecap="round"/>
<circle cx="355.0" cy="282.8" r="10" fill="#90ed7d" fill-opacity="0.25"/>
<path d="M355.0 276.8L361.0 288.8L349.0 288.8Z" fill="#90ed7d" stroke="#ffffff" stroke-width="1.3"/>
<path d="M963.0 278.8L967.0 286.8L959.0 286.8Z" fill="#90ed7d"/>
<path d="M1570.0 279.1L1574.0 287.1L1566.0 287.1Z" fill="#90ed7d"/>
<path clip-path="url(#pc)" d="M355.0 282.8 L963.0 282.8 L1570.0 283.1" fill="none" stroke="#f7a35c" stroke-width="2" stroke-linejoin="round" stroke-linecap="round"/>
<circle cx="355.0" cy="282.8" r="10" fill="#f7a35c" fill-opacity="0.25"/>
<path d="M349.0 276.8L361.0 276.8L355.0 288.8Z" fill="#f7a35c" stroke="#ffffff" stroke-width="1.3"/>
<path d="M959.0 278.8L967.0 278.8L963.0 286.8Z" fill="#f7a35c"/>
<path d="M1566.0 279.1L1574.0 279.1L1570.0 287.1Z" fill="#f7a35c"/>
<path clip-path="url(#pc)" d="M355.0 282.8 L963.0 282.8 L1570.0 283.1" fill="none" stroke="#8085e9" stroke-width="2" stroke-linejoin="round" stroke-linecap="round"/>
<circle cx="355.0" cy="282.8" r="10" fill="#8085e9" fill-opacity="0.25"/>
<circle cx="355.0" cy="282.8" r="6" fill="#8085e9" stroke="#ffffff" stroke-width="1.3"/>
<circle cx="963.0" cy="282.8" r="4" fill="#8085e9"/>
<circle cx="1570.0" cy="283.1" r="4" fill="#8085e9"/>
<path clip-path="url(#pc)" d="M355.0 282.8 L963.0 282.8 L1570.0 283.1" fill="none" stroke="#f15c80" stroke-width="2" stroke-linejoin="round" stroke-linecap="round"/>
<circle cx="355.0" cy="282.8" r="10" fill="#f15c80" fill-opacity="0.25"/>
<path d="M355.0 276.8L361.0 282.8L355.0 288.8L349.0 282.8Z" fill="#f15c80" stroke="#ffffff" stroke-width="1.3"/>
<path d="M963.0 278.8L967.0 282.8L963.0 286.8L959.0 282.8Z" fill="#f15c80"/>
<path d="M1570.0 279.1L1574.0 283.1L1570.0 287.1L1566.0 283.1Z" fill="#f15c80"/>
<path clip-path="url(#pc)" d="M355.0 282.8 L963.0 282.9 L1570.0 283.1" fill="none" stroke="#e4d354" stroke-width="2" stroke-linejoin="round" stroke-linecap="round"/>
<circle cx="355.0" cy="282.8" r="10" fill="#e4d354" fill-opacity="0.25"/>
<path d="M349.0 276.8L361.0 276.8L361.0 288.8L349.0 288.8Z" fill="#e4d354" stroke="#ffffff" stroke-width="1.3"/>
<path d="M959.0 278.9L967.0 278.9L967.0 286.9L959.0 286.9Z" fill="#e4d354"/>
<path d="M1566.0 279.1L1574.0 279.1L1574.0 287.1L1566.0 287.1Z" fill="#e4d354"/>
<path clip-path="url(#pc)" d="M355.0 282.9 L963.0 282.9 L1570.0 283.1" fill="none" stroke="#2b908f" stroke-width="2" stroke-linejoin="round" stroke-linecap="round"/>
<circle cx="355.0" cy="282.9" r="10" fill="#2b908f" fill-opacity="0.25"/>
<path d="M355.0 276.9L361.0 288.9L349.0 288.9Z" fill="#2b908f" stroke="#ffffff" stroke-width="1.3"/>
<path d="M963.0 278.9L967.0 286.9L959.0 286.9Z" fill="#2b908f"/>
<path d="M1570.0 279.1L1574.0 287.1L1566.0 287.1Z" fill="#2b908f"/>
<path clip-path="url(#pc)" d="M355.0 282.9 L963.0 282.9 L1570.0 283.1" fill="none" stroke="#f45b5b" stroke-width="2" stroke-linejoin="round" stroke-linecap="round"/>
<circle cx="355.0" cy="282.9" r="10" fill="#f45b5b" fill-opacity="0.25"/>
<path d="M349.0 276.9L361.0 276.9L355.0 288.9Z" fill="#f45b5b" stroke="#ffffff" stroke-width="1.3"/>
<path d="M959.0 278.9L967.0 278.9L963.0 286.9Z" fill="#f45b5b"/>
<path d="M1566.0 279.1L1574.0 279.1L1570.0 287.1Z" fill="#f45b5b"/>
<path clip-path="url(#pc)" d="M355.0 282.9 L963.0 282.9 L1570.0 283.1" fill="none" stroke="#91e8e1" stroke-width="2" stroke-linejoin="round" stroke-linecap="round"/>
<circle cx="355.0" cy="282.9" r="10" fill="#91e8e1" fill-opacity="0.25"/>
<circle cx="355.0" cy="282.9" r="6" fill="#91e8e1" stroke="#ffffff" stroke-width="1.3"/>
<circle cx="963.0" cy="282.9" r="4" fill="#91e8e1"/>
<circle cx="1570.0" cy="283.1" r="4" fill="#91e8e1"/>
<path clip-path="url(#pc)" d="M355.0 282.9 L963.0 282.9 L1570.0 283.1" fill="none" stroke="#7cb5ec" stroke-width="2" stroke-linejoin="round" stroke-linecap="round"/>
<circle cx="355.0" cy="282.9" r="10" fill="#7cb5ec" fill-opacity="0.25"/>
<path d="M355.0 276.9L361.0 282.9L355.0 288.9L349.0 282.9Z" fill="#7cb5ec" stroke="#ffffff" stroke-width="1.3"/>
<path d="M963.0 278.9L967.0 282.9L963.0 286.9L959.0 282.9Z" fill="#7cb5ec"/>
<path d="M1570.0 279.1L1574.0 283.1L1570.0 287.1L1566.0 283.1Z" fill="#7cb5ec"/>
<path clip-path="url(#pc)" d="M355.0 282.9 L963.0 282.9 L1570.0 283.1" fill="none" stroke="#434348" stroke-width="2" stroke-linejoin="round" stroke-linecap="round"/>
<circle cx="355.0" cy="282.9" r="10" fill="#434348" fill-opacity="0.25"/>
<path d="M349.0 276.9L361.0 276.9L361.0 288.9L349.0 288.9Z" fill="#434348" stroke="#ffffff" stroke-width="1.3"/>
<path d="M959.0 278.9L967.0 278.9L967.0 286.9L959.0 286.9Z" fill="#434348"/>
<path d="M1566.0 279.1L1574.0 279.1L1574.0 287.1L1566.0 287.1Z" fill="#434348"/>
<path clip-path="url(#pc)" d="M355.0 282.9 L963.0 282.9 L1570.0 283.1" fill="none" stroke="#90ed7d" stroke-width="2" stroke-linejoin="round" stroke-linecap="round"/>
<circle cx="355.0" cy="282.9" r="10" fill="#90ed7d" fill-opacity="0.25"/>
<path d="M355.0 276.9L361.0 288.9L349.0 288.9Z" fill="#90ed7d" stroke="#ffffff" stroke-width="1.3"/>
<path d="M963.0 278.9L967.0 286.9L959.0 286.9Z" fill="#90ed7d"/>
<path d="M1570.0 279.1L1574.0 287.1L1566.0 287.1Z" fill="#90ed7d"/>
<path clip-path="url(#pc)" d="M355.0 282.9 L963.0 282.9 L1570.0 283.1" fill="none" stroke="#f7a35c" stroke-width="2" stroke-linejoin="round" stroke-linecap="round"/>
<circle cx="355.0" cy="282.9" r="10" fill="#f7a35c" fill-opacity="0.25"/>
<path d="M349.0 276.9L361.0 276.9L355.0 288.9Z" fill="#f7a35c" stroke="#ffffff" stroke-width="1.3"/>
<path d="M959.0 278.9L967.0 278.9L963.0 286.9Z" fill="#f7a35c"/>
<path d="M1566.0 279.1L1574.0 279.1L1570.0 287.1Z" fill="#f7a35c"/>
<path clip-path="url(#pc)" d="M355.0 282.9 L963.0 282.9 L1570.0 283.1" fill="none" stroke="#8085e9" stroke-width="2" stroke-linejoin="round" stroke-linecap="round"/>
<circle cx="355.0" cy="282.9" r="10" fill="#8085e9" fill-opacity="0.25"/>
<circle cx="355.0" cy="282.9" r="6" fill="#8085e9" stroke="#ffffff" stroke-width="1.3"/>
<circle cx="963.0" cy="282.9" r="4" fill="#8085e9"/>
<circle cx="1570.0" cy="283.1" r="4" fill="#8085e9"/>
<path clip-path="url(#pc)" d="M355.0 282.9 L963.0 283.0 L1570.0 283.1" fill="none" stroke="#f15c80" stroke-width="2" stroke-linejoin="round" stroke-linecap="round"/>
<circle cx="355.0" cy="282.9" r="10" fill="#f15c80" fill-opacity="0.25"/>
<path d="M355.0 276.9L361.0 282.9L355.0 288.9L349.0 282.9Z" fill="#f15c80" stroke="#ffffff" stroke-width="1.3"/>
<path d="M963.0 279.0L967.0 283.0L963.0 287.0L959.0 283.0Z" fill="#f15c80"/>
<path d="M1570.0 279.1L1574.0 283.1L1570.0 287.1L1566.0 283.1Z" fill="#f15c80"/>
<path clip-path="url(#pc)" d="M355.0 283.0 L963.0 283.0 L1570.0 283.1" fill="none" stroke="#e4d354" stroke-width="2" stroke-linejoin="round" stroke-linecap="round"/>
<circle cx="355.0" cy="283.0" r="10" fill="#e4d354" fill-opacity="0.25"/>
<path d="M349.0 277.0L361.0 277.0L361.0 289.0L349.0 289.0Z" fill="#e4d354" stroke="#ffffff" stroke-width="1.3"/>
<path d="M959.0 279.0L967.0 279.0L967.0 287.0L959.0 287.0Z" fill="#e4d354"/>
<path d="M1566.0 279.1L1574.0 279.1L1574.0 287.1L1566.0 287.1Z" fill="#e4d354"/>
<path clip-path="url(#pc)" d="M355.0 283.0 L963.0 283.0 L1570.0 283.1" fill="none" stroke="#2b908f" stroke-width="2" stroke-linejoin="round" stroke-linecap="round"/>
<circle cx="355.0" cy="283.0" r="10" fill="#2b908f" fill-opacity="0.25"/>
<path d="M355.0 277.0L361.0 289.0L349.0 289.0Z" fill="#2b908f" stroke="#ffffff" stroke-width="1.3"/>
<path d="M963.0 279.0L967.0 287.0L959.0 287.0Z" fill="#2b908f"/>
<path d="M1570.0 279.1L1574.0 287.1L1566.0 287.1Z" fill="#2b908f"/>
<path clip-path="url(#pc)" d="M355.0 283.0 L963.0 283.0 L1570.0 283.1" fill="none" stroke="#f45b5b" stroke-width="2" stroke-linejoin="round" stroke-linecap="round"/>
<circle cx="355.0" cy="283.0" r="10" fill="#f45b5b" fill-opacity="0.25"/>
<path d="M349.0 277.0L361.0 277.0L355.0 289.0Z" fill="#f45b5b" stroke="#ffffff" stroke-width="1.3"/>
<path d="M959.0 279.0L967.0 279.0L963.0 287.0Z" fill="#f45b5b"/>
<path d="M1566.0 279.1L1574.0 279.1L1570.0 287.1Z" fill="#f45b5b"/>
<path clip-path="url(#pc)" d="M355.0 283.0 L963.0 283.0 L1570.0 283.1" fill="none" stroke="#91e8e1" stroke-width="2" stroke-linejoin="round" stroke-linecap="round"/>
<circle cx="355.0" cy="283.0" r="10" fill="#91e8e1" fill-opacity="0.25"/>
<circle cx="355.0" cy="283.0" r="6" fill="#91e8e1" stroke="#ffffff" stroke-width="1.3"/>
<circle cx="963.0" cy="283.0" r="4" fill="#91e8e1"/>
<circle cx="1570.0" cy="283.1" r="4" fill="#91e8e1"/>
<path clip-path="url(#pc)" d="M355.0 283.0 L963.0 283.0 L1570.0 283.1" fill="none" stroke="#7cb5ec" stroke-width="2" stroke-linejoin="round" stroke-linecap="round"/>
<circle cx="355.0" cy="283.0" r="10" fill="#7cb5ec" fill-opacity="0.25"/>
<path d="M355.0 277.0L361.0 283.0L355.0 289.0L349.0 283.0Z" fill="#7cb5ec" stroke="#ffffff" stroke-width="1.3"/>
<path d="M963.0 279.0L967.0 283.0L963.0 287.0L959.0 283.0Z" fill="#7cb5ec"/>
<path d="M1570.0 279.1L1574.0 283.1L1570.0 287.1L1566.0 283.1Z" fill="#7cb5ec"/>
<path clip-path="url(#pc)" d="M355.0 283.0 L963.0 283.0 L1570.0 283.1" fill="none" stroke="#434348" stroke-width="2" stroke-linejoin="round" stroke-linecap="round"/>
<circle cx="355.0" cy="283.0" r="10" fill="#434348" fill-opacity="0.25"/>
<path d="M349.0 277.0L361.0 277.0L361.0 289.0L349.0 289.0Z" fill="#434348" stroke="#ffffff" stroke-width="1.3"/>
<path d="M959.0 279.0L967.0 279.0L967.0 287.0L959.0 287.0Z" fill="#434348"/>
<path d="M1566.0 279.1L1574.0 279.1L1574.0 287.1L1566.0 287.1Z" fill="#434348"/>
<path clip-path="url(#pc)" d="M355.0 283.0 L963.0 283.0 L1570.0 283.2" fill="none" stroke="#90ed7d" stroke-width="2" stroke-linejoin="round" stroke-linecap="round"/>
<circle cx="355.0" cy="283.0" r="10" fill="#90ed7d" fill-opacity="0.25"/>
<path d="M355.0 277.0L361.0 289.0L349.0 289.0Z" fill="#90ed7d" stroke="#ffffff" stroke-width="1.3"/>
<path d="M963.0 279.0L967.0 287.0L959.0 287.0Z" fill="#90ed7d"/>
<path d="M1570.0 279.2L1574.0 287.2L1566.0 287.2Z" fill="#90ed7d"/>
<path clip-path="url(#pc)" d="M355.0 283.0 L963.0 283.0 L1570.0 283.1" fill="none" stroke="#f7a35c" stroke-width="2" stroke-linejoin="round" stroke-linecap="round"/>
<circle cx="355.0" cy="283.0" r="10" fill="#f7a35c" fill-opacity="0.25"/>
<path d="M349.0 277.0L361.0 277.0L355.0 289.0Z" fill="#f7a35c" stroke="#ffffff" stroke-width="1.3"/>
<path d="M959.0 279.0L967.0 279.0L963.0 287.0Z" fill="#f7a35c"/>
<path d="M1566.0 279.1L1574.0 279.1L1570.0 287.1Z" fill="#f7a35c"/>
<path clip-path="url(#pc)" d="M355.0 283.0 L963.0 283.0 L1570.0 283.1" fill="none" stroke="#8085e9" stroke-width="2" stroke-linejoin="round" stroke-linecap="round"/>
<circle cx="355.0" cy="283.0" r="10" fill="#8085e9" fill-opacity="0.25"/>
<circle cx="355.0" cy="283.0" r="6" fill="#8085e9" stroke="#ffffff" stroke-width="1.3"/>
<circle cx="963.0" cy="283.0" r="4" fill="#8085e9"/>
<circle cx="1570.0" cy="283.1" r="4" fill="#8085e9"/>
<path clip-path="url(#pc)" d="M355.0 283.0 L963.0 283.0 L1570.0 283.2" fill="none" stroke="#f15c80" stroke-width="2" stroke-linejoin="round" stroke-linecap="round"/>
<circle cx="355.0" cy="283.0" r="10" fill="#f15c80" fill-opacity="0.25"/>
<path d="M355.0 277.0L361.0 283.0L355.0 289.0L349.0 283.0Z" fill="#f15c80" stroke="#ffffff" stroke-width="1.3"/>
<path d="M963.0 279.0L967.0 283.0L963.0 287.0L959.0 283.0Z" fill="#f15c80"/>
<path d="M1570.0 279.2L1574.0 283.2L1570.0 287.2L1566.0 283.2Z" fill="#f15c80"/>
<path clip-path="url(#pc)" d="M355.0 283.0 L963.0 283.0 L1570.0 283.1" fill="none" stroke="#e4d354" stroke-width="2" stroke-linejoin="round" stroke-linecap="round"/>
<circle cx="355.0" cy="283.0" r="10" fill="#e4d354" fill-opacity="0.25"/>
<path d="M349.0 277.0L361.0 277.0L361.0 289.0L349.0 289.0Z" fill="#e4d354" stroke="#ffffff" stroke-width="1.3"/>
<path d="M959.0 279.0L967.0 279.0L967.0 287.0L959.0 287.0Z" fill="#e4d354"/>
<path d="M1566.0 279.1L1574.0 279.1L1574.0 287.1L1566.0 287.1Z" fill="#e4d354"/>
<path clip-path="url(#pc)" d="M355.0 283.0 L963.0 283.1 L1570.0 283.2" fill="none" stroke="#2b908f" stroke-width="2" stroke-linejoin="round" stroke-linecap="round"/>
<circle cx="355.0" cy="283.0" r="10" fill="#2b908f" fill-opacity="0.25"/>
<path d="M355.0 277.0L361.0 289.0L349.0 289.0Z" fill="#2b908f" stroke="#ffffff" stroke-width="1.3"/>
<path d="M963.0 279.1L967.0 287.1L959.0 287.1Z" fill="#2b908f"/>
<path d="M1570.0 279.2L1574.0 287.2L1566.0 287.2Z" fill="#2b908f"/>
<path clip-path="url(#pc)" d="M355.0 283.0 L963.0 283.1 L1570.0 283.2" fill="none" stroke="#f45b5b" stroke-width="2" stroke-linejoin="round" stroke-linecap="round"/>
<circle cx="355.0" cy="283.0" r="10" fill="#f45b5b" fill-opacity="0.25"/>
<path d="M349.0 277.0L361.0 277.0L355.0 289.0Z" fill="#f45b5b" stroke="#ffffff" stroke-width="1.3"/>
<path d="M959.0 279.1L967.0 279.1L963.0 287.1Z" fill="#f45b5b"/>
<path d="M1566.0 279.2L1574.0 279.2L1570.0 287.2Z" fill="#f45b5b"/>
<path clip-path="url(#pc)" d="M355.0 283.1 L963.0 283.1 L1570.0 283.2" fill="none" stroke="#91e8e1" stroke-width="2" stroke-linejoin="round" stroke-linecap="round"/>
<circle cx="355.0" cy="283.1" r="10" fill="#91e8e1" fill-opacity="0.25"/>
<circle cx="355.0" cy="283.1" r="6" fill="#91e8e1" stroke="#ffffff" stroke-width="1.3"/>
<circle cx="963.0" cy="283.1" r="4" fill="#91e8e1"/>
<circle cx="1570.0" cy="283.2" r="4" fill="#91e8e1"/>
<path clip-path="url(#pc)" d="M355.0 283.1 L963.0 283.1 L1570.0 283.2" fill="none" stroke="#7cb5ec" stroke-width="2" stroke-linejoin="round" stroke-linecap="round"/>
<circle cx="355.0" cy="283.1" r="10" fill="#7cb5ec" fill-opacity="0.25"/>
<path d="M355.0 277.1L361.0 283.1L355.0 289.1L349.0 283.1Z" fill="#7cb5ec" stroke="#ffffff" stroke-width="1.3"/>
<path d="M963.0 279.1L967.0 283.1L963.0 287.1L959.0 283.1Z" fill="#7cb5ec"/>
<path d="M1570.0 279.2L1574.0 283.2L1570.0 287.2L1566.0 283.2Z" fill="#7cb5ec"/>
<path clip-path="url(#pc)" d="M355.0 283.1 L963.0 283.1 L1570.0 283.2" fill="none" stroke="#434348" stroke-width="2" stroke-linejoin="round" stroke-linecap="round"/>
<circle cx="355.0" cy="283.1" r="10" fill="#434348" fill-opacity="0.25"/>
<path d="M349.0 277.1L361.0 277.1L361.0 289.1L349.0 289.1Z" fill="#434348" stroke="#ffffff" stroke-width="1.3"/>
<path d="M959.0 279.1L967.0 279.1L967.0 287.1L959.0 287.1Z" fill="#434348"/>
<path d="M1566.0 279.2L1574.0 279.2L1574.0 287.2L1566.0 287.2Z" fill="#434348"/>
<path clip-path="url(#pc)" d="M355.0 283.1 L963.0 283.1 L1570.0 283.2" fill="none" stroke="#90ed7d" stroke-width="2" stroke-linejoin="round" stroke-linecap="round"/>
<circle cx="355.0" cy="283.1" r="10" fill="#90ed7d" fill-opacity="0.25"/>
<path d="M355.0 277.1L361.0 289.1L349.0 289.1Z" fill="#90ed7d" stroke="#ffffff" stroke-width="1.3"/>
<path d="M963.0 279.1L967.0 287.1L959.0 287.1Z" fill="#90ed7d"/>
<path d="M1570.0 279.2L1574.0 287.2L1566.0 287.2Z" fill="#90ed7d"/>
<path clip-path="url(#pc)" d="M355.0 283.1 L963.0 283.1 L1570.0 283.2" fill="none" stroke="#f7a35c" stroke-width="2" stroke-linejoin="round" stroke-linecap="round"/>
<circle cx="355.0" cy="283.1" r="10" fill="#f7a35c" fill-opacity="0.25"/>
<path d="M349.0 277.1L361.0 277.1L355.0 289.1Z" fill="#f7a35c" stroke="#ffffff" stroke-width="1.3"/>
<path d="M959.0 279.1L967.0 279.1L963.0 287.1Z" fill="#f7a35c"/>
<path d="M1566.0 279.2L1574.0 279.2L1570.0 287.2Z" fill="#f7a35c"/>
<path clip-path="url(#pc)" d="M355.0 283.1 L963.0 283.1 L1570.0 283.2" fill="none" stroke="#8085e9" stroke-width="2" stroke-linejoin="round" stroke-linecap="round"/>
<circle cx="355.0" cy="283.1" r="10" fill="#8085e9" fill-opacity="0.25"/>
<circle cx="355.0" cy="283.1" r="6" fill="#8085e9" stroke="#ffffff" stroke-width="1.3"/>
<circle cx="963.0" cy="283.1" r="4" fill="#8085e9"/>
<circle cx="1570.0" cy="283.2" r="4" fill="#8085e9"/>
<path clip-path="url(#pc)" d="M355.0 283.1 L963.0 283.1 L1570.0 283.2" fill="none" stroke="#f15c80" stroke-width="2" stroke-linejoin="round" stroke-linecap="round"/>
<circle cx="355.0" cy="283.1" r="10" fill="#f15c80" fill-opacity="0.25"/>
<path d="M355.0 277.1L361.0 283.1L355.0 289.1L349.0 283.1Z" fill="#f15c80" stroke="#ffffff" stroke-width="1.3"/>
<path d="M963.0 279.1L967.0 283.1L963.0 287.1L959.0 283.1Z" fill="#f15c80"/>
<path d="M1570.0 279.2L1574.0 283.2L1570.0 287.2L1566.0 283.2Z" fill="#f15c80"/>
<path clip-path="url(#pc)" d="M355.0 283.1 L963.0 283.1 L1570.0 283.2" fill="none" stroke="#e4d354" stroke-width="2" stroke-linejoin="round" stroke-linecap="round"/>
<circle cx="355.0" cy="283.1" r="10" fill="#e4d354" fill-opacity="0.25"/>
<path d="M349.0 277.1L361.0 277.1L361.0 289.1L349.0 289.1Z" fill="#e4d354" stroke="#ffffff" stroke-width="1.3"/>
<path d="M959.0 279.1L967.0 279.1L967.0 287.1L959.0 287.1Z" fill="#e4d354"/>
<path d="M1566.0 279.2L1574.0 279.2L1574.0 287.2L1566.0 287.2Z" fill="#e4d354"/>
<path clip-path="url(#pc)" d="M355.0 283.1 L963.0 283.1 L1570.0 283.2" fill="none" stroke="#2b908f" stroke-width="2" stroke-linejoin="round" stroke-linecap="round"/>
<circle cx="355.0" cy="283.1" r="10" fill="#2b908f" fill-opacity="0.25"/>
<path d="M355.0 277.1L361.0 289.1L349.0 289.1Z" fill="#2b908f" stroke="#ffffff" stroke-width="1.3"/>
<path d="M963.0 279.1L967.0 287.1L959.0 287.1Z" fill="#2b908f"/>
<path d="M1570.0 279.2L1574.0 287.2L1566.0 287.2Z" fill="#2b908f"/>
<path clip-path="url(#pc)" d="M355.0 283.1 L963.0 283.1 L1570.0 283.2" fill="none" stroke="#f45b5b" stroke-width="2" stroke-linejoin="round" stroke-linecap="round"/>
<circle cx="355.0" cy="283.1" r="10" fill="#f45b5b" fill-opacity="0.25"/>
<path d="M349.0 277.1L361.0 277.1L355.0 289.1Z" fill="#f45b5b" stroke="#ffffff" stroke-width="1.3"/>
<path d="M959.0 279.1L967.0 279.1L963.0 287.1Z" fill="#f45b5b"/>
<path d="M1566.0 279.2L1574.0 279.2L1570.0 287.2Z" fill="#f45b5b"/>
<path clip-path="url(#pc)" d="M355.0 283.1 L963.0 283.1 L1570.0 283.2" fill="none" stroke="#91e8e1" stroke-width="2" stroke-linejoin="round" stroke-linecap="round"/>
<circle cx="355.0" cy="283.1" r="10" fill="#91e8e1" fill-opacity="0.25"/>
<circle cx="355.0" cy="283.1" r="6" fill="#91e8e1" stroke="#ffffff" stroke-width="1.3"/>
<circle cx="963.0" cy="283.1" r="4" fill="#91e8e1"/>
<circle cx="1570.0" cy="283.2" r="4" fill="#91e8e1"/>
<path clip-path="url(#pc)" d="M355.0 283.1 L963.0 283.1 L1570.0 283.2" fill="none" stroke="#7cb5ec" stroke-width="2" stroke-linejoin="round" stroke-linecap="round"/>
<circle cx="355.0" cy="283.1" r="10" fill="#7cb5ec" fill-opacity="0.25"/>
<path d="M355.0 277.1L361.0 283.1L355.0 289.1L349.0 283.1Z" fill="#7cb5ec" stroke="#ffffff" stroke-width="1.3"/>
<path d="M963.0 279.1L967.0 283.1L963.0 287.1L959.0 283.1Z" fill="#7cb5ec"/>
<path d="M1570.0 279.2L1574.0 283.2L1570.0 287.2L1566.0 283.2Z" fill="#7cb5ec"/>
<path clip-path="url(#pc)" d="M355.0 283.1 L963.0 283.1 L1570.0 283.2" fill="none" stroke="#434348" stroke-width="2" stroke-linejoin="round" stroke-linecap="round"/>
<circle cx="355.0" cy="283.1" r="10" fill="#434348" fill-opacity="0.25"/>
<path d="M349.0 277.1L361.0 277.1L361.0 289.1L349.0 289.1Z" fill="#434348" stroke="#ffffff" stroke-width="1.3"/>
<path d="M959.0 279.1L967.0 279.1L967.0 287.1L959.0 287.1Z" fill="#434348"/>
<path d="M1566.0 279.2L1574.0 279.2L1574.0 287.2L1566.0 287.2Z" fill="#434348"/>
<path clip-path="url(#pc)" d="M355.0 283.1 L963.0 283.1 L1570.0 283.2" fill="none" stroke="#90ed7d" stroke-width="2" stroke-linejoin="round" stroke-linecap="round"/>
<circle cx="355.0" cy="283.1" r="10" fill="#90ed7d" fill-opacity="0.25"/>
<path d="M355.0 277.1L361.0 289.1L349.0 289.1Z" fill="#90ed7d" stroke="#ffffff" stroke-width="1.3"/>
<path d="M963.0 279.1L967.0 287.1L959.0 287.1Z" fill="#90ed7d"/>
<path d="M1570.0 279.2L1574.0 287.2L1566.0 287.2Z" fill="#90ed7d"/>
<path clip-path="url(#pc)" d="M355.0 283.1 L963.0 283.1 L1570.0 283.2" fill="none" stroke="#f7a35c" stroke-width="2" stroke-linejoin="round" stroke-linecap="round"/>
<circle cx="355.0" cy="283.1" r="10" fill="#f7a35c" fill-opacity="0.25"/>
<path d="M349.0 277.1L361.0 277.1L355.0 289.1Z" fill="#f7a35c" stroke="#ffffff" stroke-width="1.3"/>
<path d="M959.0 279.1L967.0 279.1L963.0 287.1Z" fill="#f7a35c"/>
<path d="M1566.0 279.2L1574.0 279.2L1570.0 287.2Z" fill="#f7a35c"/>
<path clip-path="url(#pc)" d="M355.0 283.1 L963.0 283.1 L1570.0 283.2" fill="none" stroke="#8085e9" stroke-width="2" stroke-linejoin="round" stroke-linecap="round"/>
<circle cx="355.0" cy="283.1" r="10" fill="#8085e9" fill-opacity="0.25"/>
<circle cx="355.0" cy="283.1" r="6" fill="#8085e9" stroke="#ffffff" stroke-width="1.3"/>
<circle cx="963.0" cy="283.1" r="4" fill="#8085e9"/>
<circle cx="1570.0" cy="283.2" r="4" fill="#8085e9"/>
<path clip-path="url(#pc)" d="M355.0 283.1 L963.0 283.1 L1570.0 283.2" fill="none" stroke="#f15c80" stroke-width="2" stroke-linejoin="round" stroke-linecap="round"/>
<circle cx="355.0" cy="283.1" r="10" fill="#f15c80" fill-opacity="0.25"/>
<path d="M355.0 277.1L361.0 283.1L355.0 289.1L349.0 283.1Z" fill="#f15c80" stroke="#ffffff" stroke-width="1.3"/>
<path d="M963.0 279.1L967.0 283.1L963.0 287.1L959.0 283.1Z" fill="#f15c80"/>
<path d="M1570.0 279.2L1574.0 283.2L1570.0 287.2L1566.0 283.2Z" fill="#f15c80"/>
<path clip-path="url(#pc)" d="M355.0 283.1 L963.0 283.1 L1570.0 283.2" fill="none" stroke="#e4d354" stroke-width="2" stroke-linejoin="round" stroke-linecap="round"/>
<circle cx="355.0" cy="283.1" r="10" fill="#e4d354" fill-opacity="0.25"/>
<path d="M349.0 277.1L361.0 277.1L361.0 289.1L349.0 289.1Z" fill="#e4d354" stroke="#ffffff" stroke-width="1.3"/>
<path d="M959.0 279.1L967.0 279.1L967.0 287.1L959.0 287.1Z" fill="#e4d354"/>
<path d="M1566.0 279.2L1574.0 279.2L1574.0 287.2L1566.0 287.2Z" fill="#e4d354"/>
<path clip-path="url(#pc)" d="M355.0 283.1 L963.0 283.1 L1570.0 283.2" fill="none" stroke="#2b908f" stroke-width="2" stroke-linejoin="round" stroke-linecap="round"/>
<circle cx="355.0" cy="283.1" r="10" fill="#2b908f" fill-opacity="0.25"/>
<path d="M355.0 277.1L361.0 289.1L349.0 289.1Z" fill="#2b908f" stroke="#ffffff" stroke-width="1.3"/>
<path d="M963.0 279.1L967.0 287.1L959.0 287.1Z" fill="#2b908f"/>
<path d="M1570.0 279.2L1574.0 287.2L1566.0 287.2Z" fill="#2b908f"/>
<path clip-path="url(#pc)" d="M355.0 283.1 L963.0 283.1 L1570.0 283.2" fill="none" stroke="#f45b5b" stroke-width="2" stroke-linejoin="round" stroke-linecap="round"/>
<circle cx="355.0" cy="283.1" r="10" fill="#f45b5b" fill-opacity="0.25"/>
<path d="M349.0 277.1L361.0 277.1L355.0 289.1Z" fill="#f45b5b" stroke="#ffffff" stroke-width="1.3"/>
<path d="M959.0 279.1L967.0 279.1L963.0 287.1Z" fill="#f45b5b"/>
<path d="M1566.0 279.2L1574.0 279.2L1570.0 287.2Z" fill="#f45b5b"/>
<path clip-path="url(#pc)" d="M355.0 283.1 L963.0 283.1 L1570.0 283.2" fill="none" stroke="#91e8e1" stroke-width="2" stroke-linejoin="round" stroke-linecap="round"/>
<circle cx="355.0" cy="283.1" r="10" fill="#91e8e1" fill-opacity="0.25"/>
<circle cx="355.0" cy="283.1" r="6" fill="#91e8e1" stroke="#ffffff" stroke-width="1.3"/>
<circle cx="963.0" cy="283.1" r="4" fill="#91e8e1"/>
<circle cx="1570.0" cy="283.2" r="4" fill="#91e8e1"/>
<path clip-path="url(#pc)" d="M355.0 283.1 L963.0 283.1 L1570.0 283.2" fill="none" stroke="#7cb5ec" stroke-width="2" stroke-linejoin="round" stroke-linecap="round"/>
<circle cx="355.0" cy="283.1" r="10" fill="#7cb5ec" fill-opacity="0.25"/>
<path d="M355.0 277.1L361.0 283.1L355.0 289.1L349.0 283.1Z" fill="#7cb5ec" stroke="#ffffff" stroke-width="1.3"/>
<path d="M963.0 279.1L967.0 283.1L963.0 287.1L959.0 283.1Z" fill="#7cb5ec"/>
<path d="M1570.0 279.2L1574.0 283.2L1570.0 287.2L1566.0 283.2Z" fill="#7cb5ec"/>
<path clip-path="url(#pc)" d="M355.0 283.1 L963.0 283.1 L1570.0 283.2" fill="none" stroke="#434348" stroke-width="2" stroke-linejoin="round" stroke-linecap="round"/>
<circle cx="355.0" cy="283.1" r="10" fill="#434348" fill-opacity="0.25"/>
<path d="M349.0 277.1L361.0 277.1L361.0 289.1L349.0 289.1Z" fill="#434348" stroke="#ffffff" stroke-width="1.3"/>
<path d="M959.0 279.1L967.0 279.1L967.0 287.1L959.0 287.1Z" fill="#434348"/>
<path d="M1566.0 279.2L1574.0 279.2L1574.0 287.2L1566.0 287.2Z" fill="#434348"/>
<path clip-path="url(#pc)" d="M355.0 283.1 L963.0 283.1 L1570.0 283.2" fill="none" stroke="#90ed7d" stroke-width="2" stroke-linejoin="round" stroke-linecap="round"/>
<circle cx="355.0" cy="283.1" r="10" fill="#90ed7d" fill-opacity="0.25"/>
<path d="M355.0 277.1L361.0 289.1L349.0 289.1Z" fill="#90ed7d" stroke="#ffffff" stroke-width="1.3"/>
<path d="M963.0 279.1L967.0 287.1L959.0 287.1Z" fill="#90ed7d"/>
<path d="M1570.0 279.2L1574.0 287.2L1566.0 287.2Z" fill="#90ed7d"/>
<path clip-path="url(#pc)" d="M355.0 283.1 L963.0 283.1 L1570.0 283.2" fill="none" stroke="#f7a35c" stroke-width="2" stroke-linejoin="round" stroke-linecap="round"/>
<circle cx="355.0" cy="283.1" r="10" fill="#f7a35c" fill-opacity="0.25"/>
<path d="M349.0 277.1L361.0 277.1L355.0 289.1Z" fill="#f7a35c" stroke="#ffffff" stroke-width="1.3"/>
<path d="M959.0 279.1L967.0 279.1L963.0 287.1Z" fill="#f7a35c"/>
<path d="M1566.0 279.2L1574.0 279.2L1570.0 287.2Z" fill="#f7a35c"/>
<path clip-path="url(#pc)" d="M355.0 283.1 L963.0 283.1 L1570.0 283.2" fill="none" stroke="#8085e9" stroke-width="2" stroke-linejoin="round" stroke-linecap="round"/>
<circle cx="355.0" cy="283.1" r="10" fill="#8085e9" fill-opacity="0.25"/>
<circle cx="355.0" cy="283.1" r="6" fill="#8085e9" stroke="#ffffff" stroke-width="1.3"/>
<circle cx="963.0" cy="283.1" r="4" fill="#8085e9"/>
<circle cx="1570.0" cy="283.2" r="4" fill="#8085e9"/>
<path clip-path="url(#pc)" d="M355.0 283.1 L963.0 283.1 L1570.0 283.2" fill="none" stroke="#f15c80" stroke-width="2" stroke-linejoin="round" stroke-linecap="round"/>
<circle cx="355.0" cy="283.1" r="10" fill="#f15c80" fill-opacity="0.25"/>
<path d="M355.0 277.1L361.0 283.1L355.0 289.1L349.0 283.1Z" fill="#f15c80" stroke="#ffffff" stroke-width="1.3"/>
<path d="M963.0 279.1L967.0 283.1L963.0 287.1L959.0 283.1Z" fill="#f15c80"/>
<path d="M1570.0 279.2L1574.0 283.2L1570.0 287.2L1566.0 283.2Z" fill="#f15c80"/>
<path clip-path="url(#pc)" d="M355.0 283.1 L963.0 283.1 L1570.0 283.2" fill="none" stroke="#e4d354" stroke-width="2" stroke-linejoin="round" stroke-linecap="round"/>
<circle cx="355.0" cy="283.1" r="10" fill="#e4d354" fill-opacity="0.25"/>
<path d="M349.0 277.1L361.0 277.1L361.0 289.1L349.0 289.1Z" fill="#e4d354" stroke="#ffffff" stroke-width="1.3"/>
<path d="M959.0 279.1L967.0 279.1L967.0 287.1L959.0 287.1Z" fill="#e4d354"/>
<path d="M1566.0 279.2L1574.0 279.2L1574.0 287.2L1566.0 287.2Z" fill="#e4d354"/>
<path clip-path="url(#pc)" d="M355.0 283.2 L963.0 283.2 L1570.0 283.2" fill="none" stroke="#2b908f" stroke-width="2" stroke-linejoin="round" stroke-linecap="round"/>
<circle cx="355.0" cy="283.2" r="10" fill="#2b908f" fill-opacity="0.25"/>
<path d="M355.0 277.2L361.0 289.2L349.0 289.2Z" fill="#2b908f" stroke="#ffffff" stroke-width="1.3"/>
<path d="M963.0 279.2L967.0 287.2L959.0 287.2Z" fill="#2b908f"/>
<path d="M1570.0 279.2L1574.0 287.2L1566.0 287.2Z" fill="#2b908f"/>
<path clip-path="url(#pc)" d="M355.0 283.2 L963.0 283.2 L1570.0 283.2" fill="none" stroke="#f45b5b" stroke-width="2" stroke-linejoin="round" stroke-linecap="round"/>
<circle cx="355.0" cy="283.2" r="10" fill="#f45b5b" fill-opacity="0.25"/>
<path d="M349.0 277.2L361.0 277.2L355.0 289.2Z" fill="#f45b5b" stroke="#ffffff" stroke-width="1.3"/>
<path d="M959.0 279.2L967.0 279.2L963.0 287.2Z" fill="#f45b5b"/>
<path d="M1566.0 279.2L1574.0 279.2L1570.0 287.2Z" fill="#f45b5b"/>
<path clip-path="url(#pc)" d="M355.0 283.2 L963.0 283.2 L1570.0 283.2" fill="none" stroke="#91e8e1" stroke-width="2" stroke-linejoin="round" stroke-linecap="round"/>
<circle cx="355.0" cy="283.2" r="10" fill="#91e8e1" fill-opacity="0.25"/>
<circle cx="355.0" cy="283.2" r="6" fill="#91e8e1" stroke="#ffffff" stroke-width="1.3"/>
<circle cx="963.0" cy="283.2" r="4" fill="#91e8e1"/>
<circle cx="1570.0" cy="283.2" r="4" fill="#91e8e1"/>
<path clip-path="url(#pc)" d="M355.0 283.2 L963.0 283.2 L1570.0 283.2" fill="none" stroke="#7cb5ec" stroke-width="2" stroke-linejoin="round" stroke-linecap="round"/>
<circle cx="355.0" cy="283.2" r="10" fill="#7cb5ec" fill-opacity="0.25"/>
<path d="M355.0 277.2L361.0 283.2L355.0 289.2L349.0 283.2Z" fill="#7cb5ec" stroke="#ffffff" stroke-width="1.3"/>
<path d="M963.0 279.2L967.0 283.2L963.0 287.2L959.0 283.2Z" fill="#7cb5ec"/>
<path d="M1570.0 279.2L1574.0 283.2L1570.0 287.2L1566.0 283.2Z" fill="#7cb5ec"/>
<path clip-path="url(#pc)" d="M355.0 283.2 L963.0 283.2 L1570.0 283.2" fill="none" stroke="#434348" stroke-width="2" stroke-linejoin="round" stroke-linecap="round"/>
<circle cx="355.0" cy="283.2" r="10" fill="#434348" fill-opacity="0.25"/>
<path d="M349.0 277.2L361.0 277.2L361.0 289.2L349.0 289.2Z" fill="#434348" stroke="#ffffff" stroke-width="1.3"/>
<path d="M959.0 279.2L967.0 279.2L967.0 287.2L959.0 287.2Z" fill="#434348"/>
<path d="M1566.0 279.2L1574.0 279.2L1574.0 287.2L1566.0 287.2Z" fill="#434348"/>
<path clip-path="url(#pc)" d="M355.0 283.2 L963.0 283.2 L1570.0 283.2" fill="none" stroke="#90ed7d" stroke-width="2" stroke-linejoin="round" stroke-linecap="round"/>
<circle cx="355.0" cy="283.2" r="10" fill="#90ed7d" fill-opacity="0.25"/>
<path d="M355.0 277.2L361.0 289.2L349.0 289.2Z" fill="#90ed7d" stroke="#ffffff" stroke-width="1.3"/>
<path d="M963.0 279.2L967.0 287.2L959.0 287.2Z" fill="#90ed7d"/>
<path d="M1570.0 279.2L1574.0 287.2L1566.0 287.2Z" fill="#90ed7d"/>
<path clip-path="url(#pc)" d="M355.0 283.2 L963.0 283.2 L1570.0 283.2" fill="none" stroke="#f7a35c" stroke-width="2" stroke-linejoin="round" stroke-linecap="round"/>
<circle cx="355.0" cy="283.2" r="10" fill="#f7a35c" fill-opacity="0.25"/>
<path d="M349.0 277.2L361.0 277.2L355.0 289.2Z" fill="#f7a35c" stroke="#ffffff" stroke-width="1.3"/>
<path d="M959.0 279.2L967.0 279.2L963.0 287.2Z" fill="#f7a35c"/>
<path d="M1566.0 279.2L1574.0 279.2L1570.0 287.2Z" fill="#f7a35c"/>
<path clip-path="url(#pc)" d="M355.0 283.2 L963.0 283.2 L1570.0 283.2" fill="none" stroke="#8085e9" stroke-width="2" stroke-linejoin="round" stroke-linecap="round"/>
<circle cx="355.0" cy="283.2" r="10" fill="#8085e9" fill-opacity="0.25"/>
<circle cx="355.0" cy="283.2" r="6" fill="#8085e9" stroke="#ffffff" stroke-width="1.3"/>
<circle cx="963.0" cy="283.2" r="4" fill="#8085e9"/>
<circle cx="1570.0" cy="283.2" r="4" fill="#8085e9"/>
<path clip-path="url(#pc)" d="M355.0 283.2 L963.0 283.2 L1570.0 283.2" fill="none" stroke="#f15c80" stroke-width="2" stroke-linejoin="round" stroke-linecap="round"/>
<circle cx="355.0" cy="283.2" r="10" fill="#f15c80" fill-opacity="0.25"/>
<path d="M355.0 277.2L361.0 283.2L355.0 289.2L349.0 283.2Z" fill="#f15c80" stroke="#ffffff" stroke-width="1.3"/>
<path d="M963.0 279.2L967.0 283.2L963.0 287.2L959.0 283.2Z" fill="#f15c80"/>
<path d="M1570.0 279.2L1574.0 283.2L1570.0 287.2L1566.0 283.2Z" fill="#f15c80"/>
<path clip-path="url(#pc)" d="M355.0 283.2 L963.0 283.2 L1570.0 283.2" fill="none" stroke="#e4d354" stroke-width="2" stroke-linejoin="round" stroke-linecap="round"/>
<circle cx="355.0" cy="283.2" r="10" fill="#e4d354" fill-opacity="0.25"/>
<path d="M349.0 277.2L361.0 277.2L361.0 289.2L349.0 289.2Z" fill="#e4d354" stroke="#ffffff" stroke-width="1.3"/>
<path d="M959.0 279.2L967.0 279.2L967.0 287.2L959.0 287.2Z" fill="#e4d354"/>
<path d="M1566.0 279.2L1574.0 279.2L1574.0 287.2L1566.0 287.2Z" fill="#e4d354"/>
<path clip-path="url(#pc)" d="M355.0 283.2 L963.0 283.2 L1570.0 283.2" fill="none" stroke="#2b908f" stroke-width="2" stroke-linejoin="round" stroke-linecap="round"/>
<circle cx="355.0" cy="283.2" r="10" fill="#2b908f" fill-opacity="0.25"/>
<path d="M355.0 277.2L361.0 289.2L349.0 289.2Z" fill="#2b908f" stroke="#ffffff" stroke-width="1.3"/>
<path d="M963.0 279.2L967.0 287.2L959.0 287.2Z" fill="#2b908f"/>
<path d="M1570.0 279.2L1574.0 287.2L1566.0 287.2Z" fill="#2b908f"/>
<path clip-path="url(#pc)" d="M355.0 283.2 L963.0 283.2 L1570.0 283.2" fill="none" stroke="#f45b5b" stroke-width="2" stroke-linejoin="round" stroke-linecap="round"/>
<circle cx="355.0" cy="283.2" r="10" fill="#f45b5b" fill-opacity="0.25"/>
<path d="M349.0 277.2L361.0 277.2L355.0 289.2Z" fill="#f45b5b" stroke="#ffffff" stroke-width="1.3"/>
<path d="M959.0 279.2L967.0 279.2L963.0 287.2Z" fill="#f45b5b"/>
<path d="M1566.0 279.2L1574.0 279.2L1570.0 287.2Z" fill="#f45b5b"/>
<path clip-path="url(#pc)" d="M355.0 283.2 L963.0 283.2 L1570.0 283.2" fill="none" stroke="#91e8e1" stroke-width="2" stroke-linejoin="round" stroke-linecap="round"/>
<circle cx="355.0" cy="283.2" r="10" fill="#91e8e1" fill-opacity="0.25"/>
<circle cx="355.0" cy="283.2" r="6" fill="#91e8e1" stroke="#ffffff" stroke-width="1.3"/>
<circle cx="963.0" cy="283.2" r="4" fill="#91e8e1"/>
<circle cx="1570.0" cy="283.2" r="4" fill="#91e8e1"/>
<path clip-path="url(#pc)" d="M355.0 283.2 L963.0 283.2 L1570.0 283.2" fill="none" stroke="#7cb5ec" stroke-width="2" stroke-linejoin="round" stroke-linecap="round"/>
<circle cx="355.0" cy="283.2" r="10" fill="#7cb5ec" fill-opacity="0.25"/>
<path d="M355.0 277.2L361.0 283.2L355.0 289.2L349.0 283.2Z" fill="#7cb5ec" stroke="#ffffff" stroke-width="1.3"/>
<path d="M963.0 279.2L967.0 283.2L963.0 287.2L959.0 283.2Z" fill="#7cb5ec"/>
<path d="M1570.0 279.2L1574.0 283.2L1570.0 287.2L1566.0 283.2Z" fill="#7cb5ec"/>
<path clip-path="url(#pc)" d="M355.0 283.2 L963.0 283.2 L1570.0 283.2" fill="none" stroke="#434348" stroke-width="2" stroke-linejoin="round" stroke-linecap="round"/>
<circle cx="355.0" cy="283.2" r="10" fill="#434348" fill-opacity="0.25"/>
<path d="M349.0 277.2L361.0 277.2L361.0 289.2L349.0 289.2Z" fill="#434348" stroke="#ffffff" stroke-width="1.3"/>
<path d="M959.0 279.2L967.0 279.2L967.0 287.2L959.0 287.2Z" fill="#434348"/>
<path d="M1566.0 279.2L1574.0 279.2L1574.0 287.2L1566.0 287.2Z" fill="#434348"/>
<path clip-path="url(#pc)" d="M355.0 283.2 L963.0 283.2 L1570.0 283.2" fill="none" stroke="#90ed7d" stroke-width="2" stroke-linejoin="round" stroke-linecap="round"/>
<circle cx="355.0" cy="283.2" r="10" fill="#90ed7d" fill-opacity="0.25"/>
<path d="M355.0 277.2L361.0 289.2L349.0 289.2Z" fill="#90ed7d" stroke="#ffffff" stroke-width="1.3"/>
<path d="M963.0 279.2L967.0 287.2L959.0 287.2Z" fill="#90ed7d"/>
<path d="M1570.0 279.2L1574.0 287.2L1566.0 287.2Z" fill="#90ed7d"/>
<path clip-path="url(#pc)" d="M355.0 283.2 L963.0 283.2 L1570.0 283.2" fill="none" stroke="#f7a35c" stroke-width="2" stroke-linejoin="round" stroke-linecap="round"/>
<circle cx="355.0" cy="283.2" r="10" fill="#f7a35c" fill-opacity="0.25"/>
<path d="M349.0 277.2L361.0 277.2L355.0 289.2Z" fill="#f7a35c" stroke="#ffffff" stroke-width="1.3"/>
<path d="M959.0 279.2L967.0 279.2L963.0 287.2Z" fill="#f7a35c"/>
<path d="M1566.0 279.2L1574.0 279.2L1570.0 287.2Z" fill="#f7a35c"/>
<path clip-path="url(#pc)" d="M355.0 283.2 L963.0 283.2 L1570.0 283.2" fill="none" stroke="#8085e9" stroke-width="2" stroke-linejoin="round" stroke-linecap="round"/>
<circle cx="355.0" cy="283.2" r="10" fill="#8085e9" fill-opacity="0.25"/>
<circle cx="355.0" cy="283.2" r="6" fill="#8085e9" stroke="#ffffff" stroke-width="1.3"/>
<circle cx="963.0" cy="283.2" r="4" fill="#8085e9"/>
<circle cx="1570.0" cy="283.2" r="4" fill="#8085e9"/>
<path clip-path="url(#pc)" d="M355.0 283.2 L963.0 283.2 L1570.0 283.2" fill="none" stroke="#f15c80" stroke-width="2" stroke-linejoin="round" stroke-linecap="round"/>
<circle cx="355.0" cy="283.2" r="10" fill="#f15c80" fill-opacity="0.25"/>
<path d="M355.0 277.2L361.0 283.2L355.0 289.2L349.0 283.2Z" fill="#f15c80" stroke="#ffffff" stroke-width="1.3"/>
<path d="M963.0 279.2L967.0 283.2L963.0 287.2L959.0 283.2Z" fill="#f15c80"/>
<path d="M1570.0 279.2L1574.0 283.2L1570.0 287.2L1566.0 283.2Z" fill="#f15c80"/>
<path clip-path="url(#pc)" d="M355.0 283.2 L963.0 283.2 L1570.0 283.2" fill="none" stroke="#e4d354" stroke-width="2" stroke-linejoin="round" stroke-linecap="round"/>
<circle cx="355.0" cy="283.2" r="10" fill="#e4d354" fill-opacity="0.25"/>
<path d="M349.0 277.2L361.0 277.2L361.0 289.2L349.0 289.2Z" fill="#e4d354" stroke="#ffffff" stroke-width="1.3"/>
<path d="M959.0 279.2L967.0 279.2L967.0 287.2L959.0 287.2Z" fill="#e4d354"/>
<path d="M1566.0 279.2L1574.0 279.2L1574.0 287.2L1566.0 287.2Z" fill="#e4d354"/>
<path clip-path="url(#pc)" d="M355.0 283.2 L963.0 283.2 L1570.0 283.2" fill="none" stroke="#2b908f" stroke-width="2" stroke-linejoin="round" stroke-linecap="round"/>
<circle cx="355.0" cy="283.2" r="10" fill="#2b908f" fill-opacity="0.25"/>
<path d="M355.0 277.2L361.0 289.2L349.0 289.2Z" fill="#2b908f" stroke="#ffffff" stroke-width="1.3"/>
<path d="M963.0 279.2L967.0 287.2L959.0 287.2Z" fill="#2b908f"/>
<path d="M1570.0 279.2L1574.0 287.2L1566.0 287.2Z" fill="#2b908f"/>
<path clip-path="url(#pc)" d="M355.0 283.2 L963.0 283.2 L1570.0 283.2" fill="none" stroke="#f45b5b" stroke-width="2" stroke-linejoin="round" stroke-linecap="round"/>
<circle cx="355.0" cy="283.2" r="10" fill="#f45b5b" fill-opacity="0.25"/>
<path d="M349.0 277.2L361.0 277.2L355.0 289.2Z" fill="#f45b5b" stroke="#ffffff" stroke-width="1.3"/>
<path d="M959.0 279.2L967.0 279.2L963.0 287.2Z" fill="#f45b5b"/>
<path d="M1566.0 279.2L1574.0 279.2L1570.0 287.2Z" fill="#f45b5b"/>
<path clip-path="url(#pc)" d="M355.0 283.2 L963.0 283.2 L1570.0 283.2" fill="none" stroke="#91e8e1" stroke-width="2" stroke-linejoin="round" stroke-linecap="round"/>
<circle cx="355.0" cy="283.2" r="10" fill="#91e8e1" fill-opacity="0.25"/>
<circle cx="355.0" cy="283.2" r="6" fill="#91e8e1" stroke="#ffffff" stroke-width="1.3"/>
<circle cx="963.0" cy="283.2" r="4" fill="#91e8e1"/>
<circle cx="1570.0" cy="283.2" r="4" fill="#91e8e1"/>
<path clip-path="url(#pc)" d="M355.0 283.2 L963.0 283.2 L1570.0 283.2" fill="none" stroke="#7cb5ec" stroke-width="2" stroke-linejoin="round" stroke-linecap="round"/>
<circle cx="355.0" cy="283.2" r="10" fill="#7cb5ec" fill-opacity="0.25"/>
<path d="M355.0 277.2L361.0 283.2L355.0 289.2L349.0 283.2Z" fill="#7cb5ec" stroke="#ffffff" stroke-width="1.3"/>
<path d="M963.0 279.2L967.0 283.2L963.0 287.2L959.0 283.2Z" fill="#7cb5ec"/>
<path d="M1570.0 279.2L1574.0 283.2L1570.0 287.2L1566.0 283.2Z" fill="#7cb5ec"/>
<path clip-path="url(#pc)" d="M355.0 283.2 L963.0 283.2 L1570.0 283.2" fill="none" stroke="#434348" stroke-width="2" stroke-linejoin="round" stroke-linecap="round"/>
<circle cx="355.0" cy="283.2" r="10" fill="#434348" fill-opacity="0.25"/>
<path d="M349.0 277.2L361.0 277.2L361.0 289.2L349.0 289.2Z" fill="#434348" stroke="#ffffff" stroke-width="1.3"/>
<path d="M959.0 279.2L967.0 279.2L967.0 287.2L959.0 287.2Z" fill="#434348"/>
<path d="M1566.0 279.2L1574.0 279.2L1574.0 287.2L1566.0 287.2Z" fill="#434348"/>
<path clip-path="url(#pc)" d="M355.0 283.2 L963.0 283.2 L1570.0 283.2" fill="none" stroke="#90ed7d" stroke-width="2" stroke-linejoin="round" stroke-linecap="round"/>
<circle cx="355.0" cy="283.2" r="10" fill="#90ed7d" fill-opacity="0.25"/>
<path d="M355.0 277.2L361.0 289.2L349.0 289.2Z" fill="#90ed7d" stroke="#ffffff" stroke-width="1.3"/>
<path d="M963.0 279.2L967.0 287.2L959.0 287.2Z" fill="#90ed7d"/>
<path d="M1570.0 279.2L1574.0 287.2L1566.0 287.2Z" fill="#90ed7d"/>
<path clip-path="url(#pc)" d="M355.0 283.2 L963.0 283.2" fill="none" stroke="#f7a35c" stroke-width="2" stroke-linejoin="round" stroke-linecap="round"/>
<circle cx="355.0" cy="283.2" r="10" fill="#f7a35c" fill-opacity="0.25"/>
<path d="M349.0 277.2L361.0 277.2L355.0 289.2Z" fill="#f7a35c" stroke="#ffffff" stroke-width="1.3"/>
<path d="M959.0 279.2L967.0 279.2L963.0 287.2Z" fill="#f7a35c"/>
<path d="M1566.0 279.2L1574.0 279.2L1570.0 287.2Z" fill="#f7a35c"/>
<circle cx="355.0" cy="283.2" r="10" fill="#8085e9" fill-opacity="0.25"/>
<circle cx="355.0" cy="283.2" r="6" fill="#8085e9" stroke="#ffffff" stroke-width="1.3"/>
<circle cx="355.0" cy="283.2" r="10" fill="#f15c80" fill-opacity="0.25"/>
<path d="M355.0 277.2L361.0 283.2L355.0 289.2L349.0 283.2Z" fill="#f15c80" stroke="#ffffff" stroke-width="1.3"/>
<circle cx="355.0" cy="283.2" r="10" fill="#e4d354" fill-opacity="0.25"/>
<path d="M349.0 277.2L361.0 277.2L361.0 289.2L349.0 289.2Z" fill="#e4d354" stroke="#ffffff" stroke-width="1.3"/>
<circle cx="355.0" cy="283.2" r="10" fill="#2b908f" fill-opacity="0.25"/>
<path d="M355.0 277.2L361.0 289.2L349.0 289.2Z" fill="#2b908f" stroke="#ffffff" stroke-width="1.3"/>
<circle cx="355.0" cy="283.2" r="10" fill="#f45b5b" fill-opacity="0.25"/>
<path d="M349.0 277.2L361.0 277.2L355.0 289.2Z" fill="#f45b5b" stroke="#ffffff" stroke-width="1.3"/>
<defs><linearGradient id="tg" gradientUnits="userSpaceOnUse" x1="1050" y1="0" x2="1450" y2="0"><stop offset="0" stop-color="#c9ab82" stop-opacity="0"/><stop offset="1" stop-color="#c9ab82" stop-opacity="0.85"/></linearGradient><linearGradient id="tb" gradientUnits="userSpaceOnUse" x1="1050" y1="0" x2="1450" y2="0"><stop offset="0" stop-color="#8a9bb0" stop-opacity="0"/><stop offset="1" stop-color="#8a9bb0" stop-opacity="0.8"/></linearGradient></defs>
<path clip-path="url(#pc)" d="M1050 274.6L1570 278.9" fill="none" stroke="url(#tg)" stroke-width="2.6"/>
<path clip-path="url(#pc)" d="M1050 277.6L1570 280.9" fill="none" stroke="url(#tb)" stroke-width="1.5"/>
<circle cx="355.0" cy="283.2" r="10" fill="#9a808f" fill-opacity="0.66"/>
<circle cx="355.0" cy="282.6" r="6.6" fill="#ecd3d8"/>
<circle cx="355.0" cy="282.6" r="6" fill="#8085e9" stroke="#ffffff" stroke-width="1"/>
<path d="M349.8 277.4L360.2 277.4L360.2 287.8L349.8 287.8Z" fill="#f4e3e6"/>
<path d="M350.4 284.4L352.6 288.8L348.2 288.8Z" fill="#2b807f"/>
<path d="M359.6 284.4L361.8 288.8L357.4 288.8Z" fill="#2b807f"/>
<path d="M349.0 276.2L361.0 276.2L355.0 288.2Z" fill="#f45b5b" stroke="#ffffff" stroke-width="1"/>
<path d="M355.0 69.8 L963.0 76.8 L1570.0 211.1" fill="none" stroke="#7cb5ec" stroke-width="3.4" stroke-linejoin="round" stroke-linecap="round"/>
<circle cx="355.0" cy="69.8" r="10" fill="#7cb5ec" fill-opacity="0.25"/>
<path d="M355.0 63.8L361.0 69.8L355.0 75.8L349.0 69.8Z" fill="#7cb5ec" stroke="#ffffff" stroke-width="1.3"/>
<path d="M963.0 72.8L967.0 76.8L963.0 80.8L959.0 76.8Z" fill="#7cb5ec"/>
<path d="M1570.0 207.1L1574.0 211.1L1570.0 215.1L1566.0 211.1Z" fill="#7cb5ec"/>
<path d="M959.0 279.0L967.0 279.0L967.0 287.0L959.0 287.0Z" fill="#e4d354"/>
<path d="M1566.0 274.9L1574.0 274.9L1574.0 282.9L1566.0 282.9Z" fill="#e9ad45"/>
<path d="M1570.0 279.0L1574.0 287.0L1566.0 287.0Z" fill="#90ed7d"/>
<circle cx="1570.0" cy="282.5" r="4" fill="#91e8e1"/>
<text x="37.5" y="13.5" text-anchor="end" class="axl">800k</text><text x="37.5" y="82" text-anchor="end" class="axl">600k</text><text x="37.5" y="150.5" text-anchor="end" class="axl">400k</text><text x="37.5" y="219" text-anchor="end" class="axl">200k</text><text x="37.5" y="287.5" text-anchor="end" class="axl">0</text><text x="355.5" y="301.8" text-anchor="middle" class="axl">14</text><text x="963.1" y="301.8" text-anchor="middle" class="axl">15</text><text x="1570.6" y="301.8" text-anchor="middle" class="axl">16</text><text x="1874" y="394.5" text-anchor="end" class="cred">Highcharts.com</text>
<path d="M34.0 330.5H50.0" stroke="#000000" stroke-width="2"/><circle cx="42.0" cy="330.5" r="4" fill="#000000"/><text x="55.2" y="334.8" class="lg">All on/off</text>
<path d="M135.9 330.5H151.9" stroke="#7cb5ec" stroke-width="2"/><path d="M143.9 326.5L147.9 330.5L143.9 334.5L139.9 330.5Z" fill="#7cb5ec"/><text x="157.1" y="334.8" class="lg">US</text>
<path d="M237.8 330.5H253.8" stroke="#434348" stroke-width="2"/><path d="M241.8 326.5L249.8 326.5L249.8 334.5L241.8 334.5Z" fill="#434348"/><text x="259.0" y="334.8" class="lg">FR</text>
<path d="M339.7 330.5H355.7" stroke="#90ed7d" stroke-width="2"/><path d="M347.7 326.5L351.7 334.5L343.7 334.5Z" fill="#90ed7d"/><text x="360.9" y="334.8" class="lg">IN</text>
<path d="M441.6 330.5H457.6" stroke="#f7a35c" stroke-width="2"/><path d="M445.6 326.5L453.6 326.5L449.6 334.5Z" fill="#f7a35c"/><text x="462.8" y="334.8" class="lg">GB</text>
<path d="M543.5 330.5H559.5" stroke="#8085e9" stroke-width="2"/><circle cx="551.5" cy="330.5" r="4" fill="#8085e9"/><text x="564.7" y="334.8" class="lg">PH</text>
<path d="M645.4 330.5H661.4" stroke="#f15c80" stroke-width="2"/><path d="M653.4 326.5L657.4 330.5L653.4 334.5L649.4 330.5Z" fill="#f15c80"/><text x="666.6" y="334.8" class="lg">DE</text>
<path d="M747.3 330.5H763.3" stroke="#e4d354" stroke-width="2"/><path d="M751.3 326.5L759.3 326.5L759.3 334.5L751.3 334.5Z" fill="#e4d354"/><text x="768.5" y="334.8" class="lg">BR</text>
<path d="M849.2 330.5H865.2" stroke="#2b908f" stroke-width="2"/><path d="M857.2 326.5L861.2 334.5L853.2 334.5Z" fill="#2b908f"/><text x="870.4" y="334.8" class="lg">IT</text>
<path d="M951.1 330.5H967.1" stroke="#f45b5b" stroke-width="2"/><path d="M955.1 326.5L963.1 326.5L959.1 334.5Z" fill="#f45b5b"/><text x="972.3" y="334.8" class="lg">ES</text>
<path d="M1053.0 330.5H1069.0" stroke="#91e8e1" stroke-width="2"/><circle cx="1061.0" cy="330.5" r="4" fill="#91e8e1"/><text x="1074.2" y="334.8" class="lg">CN</text>
<path d="M1154.9 330.5H1170.9" stroke="#7cb5ec" stroke-width="2"/><path d="M1162.9 326.5L1166.9 330.5L1162.9 334.5L1158.9 330.5Z" fill="#7cb5ec"/><text x="1176.1" y="334.8" class="lg">CA</text>
<path d="M1256.8 330.5H1272.8" stroke="#434348" stroke-width="2"/><path d="M1260.8 326.5L1268.8 326.5L1268.8 334.5L1260.8 334.5Z" fill="#434348"/><text x="1278.0" y="334.8" class="lg">DZ</text>
<path d="M1358.7 330.5H1374.7" stroke="#90ed7d" stroke-width="2"/><path d="M1366.7 326.5L1370.7 334.5L1362.7 334.5Z" fill="#90ed7d"/><text x="1379.9" y="334.8" class="lg">NL</text>
<path d="M1460.6 330.5H1476.6" stroke="#f7a35c" stroke-width="2"/><path d="M1464.6 326.5L1472.6 326.5L1468.6 334.5Z" fill="#f7a35c"/><text x="1481.8" y="334.8" class="lg">MX</text>
<path d="M1562.5 330.5H1578.5" stroke="#8085e9" stroke-width="2"/><circle cx="1570.5" cy="330.5" r="4" fill="#8085e9"/><text x="1583.7" y="334.8" class="lg">JP</text>
<path d="M1664.4 330.5H1680.4" stroke="#f15c80" stroke-width="2"/><path d="M1672.4 326.5L1676.4 330.5L1672.4 334.5L1668.4 330.5Z" fill="#f15c80"/><text x="1685.6" y="334.8" class="lg">PL</text>
<path d="M1766.3 330.5H1782.3" stroke="#e4d354" stroke-width="2"/><path d="M1770.3 326.5L1778.3 326.5L1778.3 334.5L1770.3 334.5Z" fill="#e4d354"/><text x="1787.5" y="334.8" class="lg">TH</text>
<path d="M34.0 348.5H50.0" stroke="#2b908f" stroke-width="2"/><path d="M42.0 344.5L46.0 352.5L38.0 352.5Z" fill="#2b908f"/><text x="55.2" y="352.8" class="lg">AU</text>
<path d="M135.9 348.5H151.9" stroke="#f45b5b" stroke-width="2"/><path d="M139.9 344.5L147.9 344.5L143.9 352.5Z" fill="#f45b5b"/><text x="157.1" y="352.8" class="lg">AR</text>
<path d="M237.8 348.5H253.8" stroke="#91e8e1" stroke-width="2"/><circle cx="245.8" cy="348.5" r="4" fill="#91e8e1"/><text x="259.0" y="352.8" class="lg">AT</text>
<path d="M339.7 348.5H355.7" stroke="#7cb5ec" stroke-width="2"/><path d="M347.7 344.5L351.7 348.5L347.7 352.5L343.7 348.5Z" fill="#7cb5ec"/><text x="360.9" y="352.8" class="lg">BE</text>
<path d="M441.6 348.5H457.6" stroke="#434348" stroke-width="2"/><path d="M445.6 344.5L453.6 344.5L453.6 352.5L445.6 352.5Z" fill="#434348"/><text x="462.8" y="352.8" class="lg">CO</text>
<path d="M543.5 348.5H559.5" stroke="#90ed7d" stroke-width="2"/><path d="M551.5 344.5L555.5 352.5L547.5 352.5Z" fill="#90ed7d"/><text x="564.7" y="352.8" class="lg">EG</text>
<path d="M645.4 348.5H661.4" stroke="#f7a35c" stroke-width="2"/><path d="M649.4 344.5L657.4 344.5L653.4 352.5Z" fill="#f7a35c"/><text x="666.6" y="352.8" class="lg">CH</text>
<path d="M747.3 348.5H763.3" stroke="#8085e9" stroke-width="2"/><circle cx="755.3" cy="348.5" r="4" fill="#8085e9"/><text x="768.5" y="352.8" class="lg">CZ</text>
<path d="M849.2 348.5H865.2" stroke="#f15c80" stroke-width="2"/><path d="M857.2 344.5L861.2 348.5L857.2 352.5L853.2 348.5Z" fill="#f15c80"/><text x="870.4" y="352.8" class="lg">GR</text>
<path d="M951.1 348.5H967.1" stroke="#e4d354" stroke-width="2"/><path d="M955.1 344.5L963.1 344.5L963.1 352.5L955.1 352.5Z" fill="#e4d354"/><text x="972.3" y="352.8" class="lg">TW</text>
<path d="M1053.0 348.5H1069.0" stroke="#2b908f" stroke-width="2"/><path d="M1061.0 344.5L1065.0 352.5L1057.0 352.5Z" fill="#2b908f"/><text x="1074.2" y="352.8" class="lg">SG</text>
<path d="M1154.9 348.5H1170.9" stroke="#f45b5b" stroke-width="2"/><path d="M1158.9 344.5L1166.9 344.5L1162.9 352.5Z" fill="#f45b5b"/><text x="1176.1" y="352.8" class="lg">IL</text>
<path d="M1256.8 348.5H1272.8" stroke="#91e8e1" stroke-width="2"/><circle cx="1264.8" cy="348.5" r="4" fill="#91e8e1"/><text x="1278.0" y="352.8" class="lg">UA</text>
<path d="M1358.7 348.5H1374.7" stroke="#7cb5ec" stroke-width="2"/><path d="M1366.7 344.5L1370.7 348.5L1366.7 352.5L1362.7 348.5Z" fill="#7cb5ec"/><text x="1379.9" y="352.8" class="lg">PT</text>
<path d="M1460.6 348.5H1476.6" stroke="#434348" stroke-width="2"/><path d="M1464.6 344.5L1472.6 344.5L1472.6 352.5L1464.6 352.5Z" fill="#434348"/><text x="1481.8" y="352.8" class="lg">RO</text>
<path d="M1562.5 348.5H1578.5" stroke="#90ed7d" stroke-width="2"/><path d="M1570.5 344.5L1574.5 352.5L1566.5 352.5Z" fill="#90ed7d"/><text x="1583.7" y="352.8" class="lg">HU</text>
<path d="M1664.4 348.5H1680.4" stroke="#f7a35c" stroke-width="2"/><path d="M1668.4 344.5L1676.4 344.5L1672.4 352.5Z" fill="#f7a35c"/><text x="1685.6" y="352.8" class="lg">CL</text>
<path d="M1766.3 348.5H1782.3" stroke="#8085e9" stroke-width="2"/><circle cx="1774.3" cy="348.5" r="4" fill="#8085e9"/><text x="1787.5" y="352.8" class="lg">MA</text>
<path d="M34 376L40 364.5L46 376Z" fill="#cccccc"/>
<text x="49.5" y="373.6" class="nav">1/12</text>
<path d="M81 364.5L93 364.5L87 376Z" fill="#003399"/>

</svg>
</div>

<!-- tooltip -->
<div id="tt"><div class="in">
<div class="tr d">2025-04-14</div>
<div class="tr"><span class="mono" style="color:#7cb5ec">US: </span><b>102,204</b></div>
<div class="tr"><span class="mono" style="color:#434348">FR: </span><b>39,584</b></div>
<div class="tr"><span class="mono" style="color:#f7a35c">GB: </span><b>30,854</b></div>
<div class="tr"><span class="mono" style="color:#90ed7d">IN: </span><b>28,977</b></div>
<div class="tr"><span class="mono" style="color:#8085e9">PH: </span><b>28,550</b></div>
<div class="tr"><span class="mono" style="color:#f15c80">DE: </span><b>28,274</b></div>
<div class="tr"><span class="mono" style="color:#2b908f">IT: </span><b>27,049</b></div>
<div class="tr"><span class="mono" style="color:#e4d354">BR: </span><b>25,211</b></div>
<div class="tr"><span class="mono" style="color:#f45b5b">ES: </span><b>23,299</b></div>
<div class="tr"><span class="mono" style="color:#7cb5ec">CA: </span><b>18,708</b></div>
<div class="tr"><span class="mono" style="color:#91e8e1">CN: </span><b>17,849</b></div>
<div class="tr"><span class="mono" style="color:#434348">DZ: </span><b>15,596</b></div>
<div class="tr"><span class="mono" style="color:#90ed7d">NL: </span><b>15,233</b></div>
<div class="tr"><span class="mono" style="color:#f7a35c">MX: </span><b>13,071</b></div>
<div class="tr"><span class="mono" style="color:#8085e9">JP: </span><b>13,065</b></div>
<div class="tr"><span class="mono" style="color:#f15c80">PL: </span><b>12,123</b></div>
<div class="tr"><span class="mono" style="color:#e4d354">TH: </span><b>9,871</b></div>
<div class="tr"><span class="mono" style="color:#2b908f">AU: </span><b>8,981</b></div>
<div class="tr"><span class="mono" style="color:#f45b5b">AR: </span><b>7,117</b></div>
<div class="tr"><span class="mono" style="color:#7cb5ec">BE: </span><b>6,666</b></div>
<div class="tr"><span class="mono" style="letter-spacing:0.55px">...</span></div>
<div class="tr tot"><span class="ser">Total</span><span class="ser">:</span> <b>624,403</b></div>

</div></div>

<!-- mouse cursor -->
<svg class="abs" style="left:347px;top:231px;z-index:30" width="16" height="24" viewBox="0 0 16 24">
  <path d="M1.6 1.8L1.6 17.8L2.9 17.8L5.5 14.7L7.9 19.6L10.4 19.6L10.4 17.4L8.7 13.5L12.6 13.5L12.6 12.6Z" fill="#ffffff" stroke="#ffffff" stroke-width="2.6" stroke-linejoin="round" stroke-opacity="0.6"/><path d="M1.6 1.8L1.6 17.8L2.9 17.8L5.5 14.7L7.9 19.6L10.4 19.6L10.4 17.4L8.7 13.5L12.6 13.5L12.6 12.6Z" fill="#ffffff" stroke="#000000" stroke-width="1.15" stroke-linejoin="miter"/>
</svg>

<div class="r" style="left:363px;top:581px;width:870px;height:204px;background:#cccccc"></div>
<div class="r" style="left:364px;top:582px;width:868px;height:202px;background:#f8f8f8"></div>
<div class="r" style="left:364px;top:582px;width:85px;height:156px;background:#cccccc"></div>
<div class="r" style="left:365px;top:583px;width:83px;height:61px;background:#ffffff"></div>
<div class="r" style="left:365px;top:645px;width:83px;height:30px;background:#ffffff"></div>
<div class="r" style="left:365px;top:676px;width:83px;height:30px;background:#ffffff"></div>
<div class="r" style="left:365px;top:707px;width:83px;height:30px;background:#ffffff"></div>
<div class="c" style="left:365px;top:645.5px;width:83px;height:30px;line-height:30px;text-align:left;padding-left:7.5px;">2025-04-16</div>
<div class="c" style="left:365px;top:676.5px;width:83px;height:30px;line-height:30px;text-align:left;padding-left:7.5px;">15</div>
<div class="c" style="left:365px;top:707.5px;width:83px;height:30px;line-height:30px;text-align:left;padding-left:7.5px;">14</div>
<div class="r" style="left:449px;top:582px;width:475px;height:202px;background:#cccccc"></div>
<div class="r" style="left:450px;top:582px;width:473px;height:202px;background:#ffffff"></div>
<div class="r" style="left:450px;top:582px;width:473px;height:187px;background:#cccccc"></div>
<div class="r" style="left:450px;top:769px;width:473px;height:15px;background:#fcfcfc"></div>
<div class="r" style="left:451px;top:583px;width:212px;height:30px;background:#ffffff"></div>
<div class="r" style="left:451px;top:738px;width:212px;height:30px;background:#ffffff"></div>
<div class="c b" style="left:451px;top:583.5px;width:212px;height:30px;line-height:30px;text-align:center;">US</div>
<div class="c b" style="left:451px;top:738.5px;width:212px;height:30px;line-height:30px;text-align:center;">US</div>
<div class="r" style="left:451px;top:614px;width:86px;height:30px;background:#ffffff"></div>
<div class="r" style="left:451px;top:645px;width:86px;height:30px;background:#ffffff"></div>
<div class="r" style="left:451px;top:676px;width:86px;height:30px;background:#ffffff"></div>
<div class="r" style="left:451px;top:707px;width:86px;height:30px;background:#ffffff"></div>
<div class="c b" style="left:451px;top:614.5px;width:86px;height:30px;line-height:30px;text-align:center;">IMP</div>
<div class="c" style="left:451px;top:645.5px;width:86px;height:30px;line-height:30px;text-align:right;padding-right:6.9px;">41,805</div>
<div class="c" style="left:451px;top:676.5px;width:86px;height:30px;line-height:30px;text-align:right;padding-right:6.9px;">97,621</div>
<div class="c" style="left:451px;top:707.5px;width:86px;height:30px;line-height:30px;text-align:right;padding-right:6.9px;">102,204</div>
<div class="r" style="left:538px;top:614px;width:52px;height:30px;background:#ffffff"></div>
<div class="r" style="left:538px;top:645px;width:52px;height:30px;background:#ffffff"></div>
<div class="r" style="left:538px;top:676px;width:52px;height:30px;background:#ffffff"></div>
<div class="r" style="left:538px;top:707px;width:52px;height:30px;background:#ffffff"></div>
<div class="c b" style="left:538px;top:614.5px;width:52px;height:30px;line-height:30px;text-align:center;">CPM</div>
<div class="c" style="left:538px;top:645.5px;width:52px;height:30px;line-height:30px;text-align:center;">0.000</div>
<div class="c" style="left:538px;top:676.5px;width:52px;height:30px;line-height:30px;text-align:center;">0.018</div>
<div class="c" style="left:538px;top:707.5px;width:52px;height:30px;line-height:30px;text-align:center;">0.017</div>
<div class="r" style="left:591px;top:614px;width:72px;height:30px;background:#ffffff"></div>
<div class="r" style="left:591px;top:645px;width:72px;height:30px;background:#ffffff"></div>
<div class="r" style="left:591px;top:676px;width:72px;height:30px;background:#ffffff"></div>
<div class="r" style="left:591px;top:707px;width:72px;height:30px;background:#ffffff"></div>
<div class="c b" style="left:591px;top:614.5px;width:72px;height:30px;line-height:30px;text-align:center;">EARN</div>
<div class="c" style="left:591px;top:645.5px;width:72px;height:30px;line-height:30px;text-align:right;padding-right:6.9px;">$0.00</div>
<div class="c" style="left:591px;top:676.5px;width:72px;height:30px;line-height:30px;text-align:right;padding-right:6.9px;">$1.75</div>
<div class="c" style="left:591px;top:707.5px;width:72px;height:30px;line-height:30px;text-align:right;padding-right:6.9px;">$1.75</div>
<div class="r" style="left:664px;top:583px;width:212px;height:30px;background:#ffffff"></div>
<div class="r" style="left:664px;top:738px;width:212px;height:30px;background:#ffffff"></div>
<div class="c b" style="left:664px;top:583.5px;width:212px;height:30px;line-height:30px;text-align:center;">FR</div>
<div class="c b" style="left:664px;top:738.5px;width:212px;height:30px;line-height:30px;text-align:center;">FR</div>
<div class="r" style="left:664px;top:614px;width:86px;height:30px;background:#ffffff"></div>
<div class="r" style="left:664px;top:645px;width:86px;height:30px;background:#ffffff"></div>
<div class="r" style="left:664px;top:676px;width:86px;height:30px;background:#ffffff"></div>
<div class="r" style="left:664px;top:707px;width:86px;height:30px;background:#ffffff"></div>
<div class="c b" style="left:664px;top:614.5px;width:86px;height:30px;line-height:30px;text-align:center;">IMP</div>
<div class="c" style="left:664px;top:645.5px;width:86px;height:30px;line-height:30px;text-align:right;padding-right:6.9px;">10,708</div>
<div class="c" style="left:664px;top:676.5px;width:86px;height:30px;line-height:30px;text-align:right;padding-right:6.9px;">37,991</div>
<div class="c" style="left:664px;top:707.5px;width:86px;height:30px;line-height:30px;text-align:right;padding-right:6.9px;">39,584</div>
<div class="r" style="left:751px;top:614px;width:52px;height:30px;background:#ffffff"></div>
<div class="r" style="left:751px;top:645px;width:52px;height:30px;background:#ffffff"></div>
<div class="r" style="left:751px;top:676px;width:52px;height:30px;background:#ffffff"></div>
<div class="r" style="left:751px;top:707px;width:52px;height:30px;background:#ffffff"></div>
<div class="c b" style="left:751px;top:614.5px;width:52px;height:30px;line-height:30px;text-align:center;">CPM</div>
<div class="c" style="left:751px;top:645.5px;width:52px;height:30px;line-height:30px;text-align:center;">0.000</div>
<div class="c" style="left:751px;top:676.5px;width:52px;height:30px;line-height:30px;text-align:center;">0.018</div>
<div class="c" style="left:751px;top:707.5px;width:52px;height:30px;line-height:30px;text-align:center;">0.017</div>
<div class="r" style="left:804px;top:614px;width:72px;height:30px;background:#ffffff"></div>
<div class="r" style="left:804px;top:645px;width:72px;height:30px;background:#ffffff"></div>
<div class="r" style="left:804px;top:676px;width:72px;height:30px;background:#ffffff"></div>
<div class="r" style="left:804px;top:707px;width:72px;height:30px;background:#ffffff"></div>
<div class="c b" style="left:804px;top:614.5px;width:72px;height:30px;line-height:30px;text-align:center;">EARN</div>
<div class="c" style="left:804px;top:645.5px;width:72px;height:30px;line-height:30px;text-align:right;padding-right:6.9px;">$0.00</div>
<div class="c" style="left:804px;top:676.5px;width:72px;height:30px;line-height:30px;text-align:right;padding-right:6.9px;">$0.67</div>
<div class="c" style="left:804px;top:707.5px;width:72px;height:30px;line-height:30px;text-align:right;padding-right:6.9px;">$0.67</div>
<div class="r" style="left:877px;top:583px;width:46px;height:30px;background:#ffffff"></div>
<div class="r" style="left:877px;top:738px;width:46px;height:30px;background:#ffffff"></div>
<div class="r" style="left:877px;top:614px;width:46px;height:30px;background:#ffffff"></div>
<div class="r" style="left:877px;top:645px;width:46px;height:30px;background:#ffffff"></div>
<div class="r" style="left:877px;top:676px;width:46px;height:30px;background:#ffffff"></div>
<div class="r" style="left:877px;top:707px;width:46px;height:30px;background:#ffffff"></div>
<div class="r" style="left:877px;top:583px;width:46px;height:186px;overflow:hidden;background:none">
<div class="c b" style="left:0;top:31.5px;width:86px;height:30px;line-height:30px;text-align:center">IMP</div>
<div class="c" style="left:0;top:62.5px;width:86px;height:30px;line-height:30px;text-align:right;padding-right:6.9px">19,416</div>
<div class="c" style="left:0;top:93.5px;width:86px;height:30px;line-height:30px;text-align:right;padding-right:6.9px">30,104</div>
<div class="c" style="left:0;top:124.5px;width:86px;height:30px;line-height:30px;text-align:right;padding-right:6.9px">28,977</div>
</div>
<svg class="r" style="left:450px;top:769px" width="473" height="15" viewBox="0 0 473 15"><path d="M5 7.5L10.2 3V12Z" fill="#868686"/><path d="M467.2 7.5L462 3V12Z" fill="#868686"/><rect x="18" y="3.2" width="97" height="8.8" rx="4.4" fill="#8b8b8b"/></svg>
<div class="r" style="left:924px;top:582px;width:308px;height:156px;background:#cccccc"></div>
<div class="r" style="left:925px;top:583px;width:84px;height:61px;background:#ffffff"></div>
<div class="c b" style="left:925px;top:583.9px;width:84px;height:61px;line-height:61px;text-align:center;">Other</div>
<div class="r" style="left:925px;top:645px;width:84px;height:30px;background:#ffffff"></div>
<div class="c" style="left:925px;top:645.5px;width:84px;height:30px;line-height:30px;text-align:right;padding-right:6.9px;">92,317</div>
<div class="r" style="left:925px;top:676px;width:84px;height:30px;background:#ffffff"></div>
<div class="c" style="left:925px;top:676.5px;width:84px;height:30px;line-height:30px;text-align:right;padding-right:6.9px;">260,106</div>
<div class="r" style="left:925px;top:707px;width:84px;height:30px;background:#ffffff"></div>
<div class="c" style="left:925px;top:707.5px;width:84px;height:30px;line-height:30px;text-align:right;padding-right:6.9px;">272,552</div>
<div class="r" style="left:1010px;top:583px;width:84px;height:61px;background:#fcfcfc"></div>
<div class="c b" style="left:1010px;top:583.9px;width:84px;height:61px;line-height:61px;text-align:center;">Total</div>
<div class="r" style="left:1010px;top:645px;width:84px;height:30px;background:#fcfcfc"></div>
<div class="c" style="left:1010px;top:645.5px;width:84px;height:30px;line-height:30px;text-align:right;padding-right:6.9px;">210,877</div>
<div class="r" style="left:1010px;top:676px;width:84px;height:30px;background:#fcfcfc"></div>
<div class="c" style="left:1010px;top:676.5px;width:84px;height:30px;line-height:30px;text-align:right;padding-right:6.9px;">603,893</div>
<div class="r" style="left:1010px;top:707px;width:84px;height:30px;background:#fcfcfc"></div>
<div class="c" style="left:1010px;top:707.5px;width:84px;height:30px;line-height:30px;text-align:right;padding-right:6.9px;">624,403</div>
<div class="r" style="left:1095px;top:583px;width:55px;height:61px;background:#fcfcfc"></div>
<div class="c b" style="left:1095px;top:583.9px;width:55px;height:61px;line-height:61px;text-align:center;">CPM</div>
<div class="r" style="left:1095px;top:645px;width:55px;height:30px;background:#fcfcfc"></div>
<div class="c" style="left:1095px;top:645.5px;width:55px;height:30px;line-height:30px;text-align:right;padding-right:6.9px;">0.000</div>
<div class="r" style="left:1095px;top:676px;width:55px;height:30px;background:#fcfcfc"></div>
<div class="c" style="left:1095px;top:676.5px;width:55px;height:30px;line-height:30px;text-align:right;padding-right:6.9px;">0.017</div>
<div class="r" style="left:1095px;top:707px;width:55px;height:30px;background:#fcfcfc"></div>
<div class="c" style="left:1095px;top:707.5px;width:55px;height:30px;line-height:30px;text-align:right;padding-right:6.9px;">0.016</div>
<div class="r" style="left:1151px;top:583px;width:80px;height:61px;background:#fcfcfc"></div>
<div class="c b" style="left:1151px;top:583.9px;width:80px;height:61px;line-height:61px;text-align:center;">Earnings</div>
<div class="r" style="left:1151px;top:645px;width:80px;height:30px;background:#fcfcfc"></div>
<div class="c" style="left:1151px;top:645.5px;width:80px;height:30px;line-height:30px;text-align:right;padding-right:6.9px;">$0.00</div>
<div class="r" style="left:1151px;top:676px;width:80px;height:30px;background:#fcfcfc"></div>
<div class="c" style="left:1151px;top:676.5px;width:80px;height:30px;line-height:30px;text-align:right;padding-right:6.9px;">$10.00</div>
<div class="r" style="left:1151px;top:707px;width:80px;height:30px;background:#fcfcfc"></div>
<div class="c" style="left:1151px;top:707.5px;width:80px;height:30px;line-height:30px;text-align:right;padding-right:6.9px;">$10.00</div>
<div class="r" style="left:1279px;top:581px;width:268px;height:404px;background:#cccccc"></div>
<div class="r" style="left:1280px;top:582px;width:45px;height:30px;background:#fff"></div>
<div class="c b" style="left:1280px;top:582.5px;width:45px;height:30px;line-height:30px;text-align:left;padding-left:7.5px;">GEO</div>
<div class="r" style="left:1326px;top:582px;width:113px;height:30px;background:#fff"></div>
<div class="c b" style="left:1326px;top:582.5px;width:113px;height:30px;line-height:30px;text-align:left;padding-left:7.5px;">Impressions</div>
<div class="r" style="left:1440px;top:582px;width:49px;height:30px;background:#fff"></div>
<div class="c b" style="left:1440px;top:582.5px;width:49px;height:30px;line-height:30px;text-align:center;">CPM</div>
<div class="r" style="left:1490px;top:582px;width:56px;height:30px;background:#fff"></div>
<div class="c b" style="left:1490px;top:582.5px;width:56px;height:30px;line-height:30px;text-align:right;padding-right:6.9px;">EARN</div>
<div class="r" style="left:1280px;top:613px;width:45px;height:30px;background:#fff"></div>
<div class="c" style="left:1280px;top:613.5px;width:45px;height:30px;line-height:30px;text-align:left;padding-left:7.5px;">US</div>
<div class="r" style="left:1326px;top:613px;width:57px;height:30px;background:#fff"></div>
<div class="c" style="left:1326px;top:613.5px;width:57px;height:30px;line-height:30px;text-align:right;padding-right:6.9px;">241,630</div>
<div class="r" style="left:1384px;top:613px;width:55px;height:30px;background:#fff"></div>
<div class="c" style="left:1384px;top:613.5px;width:55px;height:30px;line-height:30px;text-align:right;padding-right:6.9px;">16.79%</div>
<div class="r" style="left:1440px;top:613px;width:49px;height:30px;background:#fff"></div>
<div class="c" style="left:1440px;top:613.5px;width:49px;height:30px;line-height:30px;text-align:center;">0.015</div>
<div class="r" style="left:1490px;top:613px;width:56px;height:30px;background:#fff"></div>
<div class="c" style="left:1490px;top:613.5px;width:56px;height:30px;line-height:30px;text-align:right;padding-right:6.9px;">$3.50</div>
<div class="r" style="left:1280px;top:644px;width:45px;height:30px;background:#fff"></div>
<div class="c" style="left:1280px;top:644.5px;width:45px;height:30px;line-height:30px;text-align:left;padding-left:7.5px;">FR</div>
<div class="r" style="left:1326px;top:644px;width:57px;height:30px;background:#fff"></div>
<div class="c" style="left:1326px;top:644.5px;width:57px;height:30px;line-height:30px;text-align:right;padding-right:6.9px;">88,283</div>
<div class="r" style="left:1384px;top:644px;width:55px;height:30px;background:#fff"></div>
<div class="c" style="left:1384px;top:644.5px;width:55px;height:30px;line-height:30px;text-align:right;padding-right:6.9px;">6.13%</div>
<div class="r" style="left:1440px;top:644px;width:49px;height:30px;background:#fff"></div>
<div class="c" style="left:1440px;top:644.5px;width:49px;height:30px;line-height:30px;text-align:center;">0.015</div>
<div class="r" style="left:1490px;top:644px;width:56px;height:30px;background:#fff"></div>
<div class="c" style="left:1490px;top:644.5px;width:56px;height:30px;line-height:30px;text-align:right;padding-right:6.9px;">$1.33</div>
<div class="r" style="left:1280px;top:675px;width:45px;height:30px;background:#fff"></div>
<div class="c" style="left:1280px;top:675.5px;width:45px;height:30px;line-height:30px;text-align:left;padding-left:7.5px;">IN</div>
<div class="r" style="left:1326px;top:675px;width:57px;height:30px;background:#fff"></div>
<div class="c" style="left:1326px;top:675.5px;width:57px;height:30px;line-height:30px;text-align:right;padding-right:6.9px;">74,859</div>
<div class="r" style="left:1384px;top:675px;width:55px;height:30px;background:#fff"></div>
<div class="c" style="left:1384px;top:675.5px;width:55px;height:30px;line-height:30px;text-align:right;padding-right:6.9px;">5.20%</div>
<div class="r" style="left:1440px;top:675px;width:49px;height:30px;background:#fff"></div>
<div class="c" style="left:1440px;top:675.5px;width:49px;height:30px;line-height:30px;text-align:center;">0.010</div>
<div class="r" style="left:1490px;top:675px;width:56px;height:30px;background:#fff"></div>
<div class="c" style="left:1490px;top:675.5px;width:56px;height:30px;line-height:30px;text-align:right;padding-right:6.9px;">$0.77</div>
<div class="r" style="left:1280px;top:706px;width:45px;height:30px;background:#fff"></div>
<div class="c" style="left:1280px;top:706.5px;width:45px;height:30px;line-height:30px;text-align:left;padding-left:7.5px;">GB</div>
<div class="r" style="left:1326px;top:706px;width:57px;height:30px;background:#fff"></div>
<div class="c" style="left:1326px;top:706.5px;width:57px;height:30px;line-height:30px;text-align:right;padding-right:6.9px;">68,308</div>
<div class="r" style="left:1384px;top:706px;width:55px;height:30px;background:#fff"></div>
<div class="c" style="left:1384px;top:706.5px;width:55px;height:30px;line-height:30px;text-align:right;padding-right:6.9px;">4.75%</div>
<div class="r" style="left:1440px;top:706px;width:49px;height:30px;background:#fff"></div>
<div class="c" style="left:1440px;top:706.5px;width:49px;height:30px;line-height:30px;text-align:center;">0.015</div>
<div class="r" style="left:1490px;top:706px;width:56px;height:30px;background:#fff"></div>
<div class="c" style="left:1490px;top:706.5px;width:56px;height:30px;line-height:30px;text-align:right;padding-right:6.9px;">$1.05</div>
<div class="r" style="left:1280px;top:737px;width:45px;height:30px;background:#fff"></div>
<div class="c" style="left:1280px;top:737.5px;width:45px;height:30px;line-height:30px;text-align:left;padding-left:7.5px;">PH</div>
<div class="r" style="left:1326px;top:737px;width:57px;height:30px;background:#fff"></div>
<div class="c" style="left:1326px;top:737.5px;width:57px;height:30px;line-height:30px;text-align:right;padding-right:6.9px;">65,354</div>
<div class="r" style="left:1384px;top:737px;width:55px;height:30px;background:#fff"></div>
<div class="c" style="left:1384px;top:737.5px;width:55px;height:30px;line-height:30px;text-align:right;padding-right:6.9px;">4.54%</div>
<div class="r" style="left:1440px;top:737px;width:49px;height:30px;background:#fff"></div>
<div class="c" style="left:1440px;top:737.5px;width:49px;height:30px;line-height:30px;text-align:center;">0.011</div>
<div class="r" style="left:1490px;top:737px;width:56px;height:30px;background:#fff"></div>
<div class="c" style="left:1490px;top:737.5px;width:56px;height:30px;line-height:30px;text-align:right;padding-right:6.9px;">$0.72</div>
<div class="r" style="left:1280px;top:768px;width:45px;height:30px;background:#fff"></div>
<div class="c" style="left:1280px;top:768.5px;width:45px;height:30px;line-height:30px;text-align:left;padding-left:7.5px;">DE</div>
<div class="r" style="left:1326px;top:768px;width:57px;height:30px;background:#fff"></div>
<div class="c" style="left:1326px;top:768.5px;width:57px;height:30px;line-height:30px;text-align:right;padding-right:6.9px;">62,758</div>
<div class="r" style="left:1384px;top:768px;width:55px;height:30px;background:#fff"></div>
<div class="c" style="left:1384px;top:768.5px;width:55px;height:30px;line-height:30px;text-align:right;padding-right:6.9px;">4.36%</div>
<div class="r" style="left:1440px;top:768px;width:49px;height:30px;background:#fff"></div>
<div class="c" style="left:1440px;top:768.5px;width:49px;height:30px;line-height:30px;text-align:center;">0.016</div>
<div class="r" style="left:1490px;top:768px;width:56px;height:30px;background:#fff"></div>
<div class="c" style="left:1490px;top:768.5px;width:56px;height:30px;line-height:30px;text-align:right;padding-right:6.9px;">$1.02</div>
<div class="r" style="left:1280px;top:799px;width:45px;height:30px;background:#fff"></div>
<div class="c" style="left:1280px;top:799.5px;width:45px;height:30px;line-height:30px;text-align:left;padding-left:7.5px;">BR</div>
<div class="r" style="left:1326px;top:799px;width:57px;height:30px;background:#fff"></div>
<div class="c" style="left:1326px;top:799.5px;width:57px;height:30px;line-height:30px;text-align:right;padding-right:6.9px;">59,297</div>
<div class="r" style="left:1384px;top:799px;width:55px;height:30px;background:#fff"></div>
<div class="c" style="left:1384px;top:799.5px;width:55px;height:30px;line-height:30px;text-align:right;padding-right:6.9px;">4.12%</div>
<div class="r" style="left:1440px;top:799px;width:49px;height:30px;background:#fff"></div>
<div class="c" style="left:1440px;top:799.5px;width:49px;height:30px;line-height:30px;text-align:center;">0.013</div>
<div class="r" style="left:1490px;top:799px;width:56px;height:30px;background:#fff"></div>
<div class="c" style="left:1490px;top:799.5px;width:56px;height:30px;line-height:30px;text-align:right;padding-right:6.9px;">$0.76</div>
<div class="r" style="left:1280px;top:830px;width:45px;height:30px;background:#fff"></div>
<div class="c" style="left:1280px;top:830.5px;width:45px;height:30px;line-height:30px;text-align:left;padding-left:7.5px;">IT</div>
<div class="r" style="left:1326px;top:830px;width:57px;height:30px;background:#fff"></div>
<div class="c" style="left:1326px;top:830.5px;width:57px;height:30px;line-height:30px;text-align:right;padding-right:6.9px;">57,583</div>
<div class="r" style="left:1384px;top:830px;width:55px;height:30px;background:#fff"></div>
<div class="c" style="left:1384px;top:830.5px;width:55px;height:30px;line-height:30px;text-align:right;padding-right:6.9px;">4.00%</div>
<div class="r" style="left:1440px;top:830px;width:49px;height:30px;background:#fff"></div>
<div class="c" style="left:1440px;top:830.5px;width:49px;height:30px;line-height:30px;text-align:center;">0.015</div>
<div class="r" style="left:1490px;top:830px;width:56px;height:30px;background:#fff"></div>
<div class="c" style="left:1490px;top:830.5px;width:56px;height:30px;line-height:30px;text-align:right;padding-right:6.9px;">$0.87</div>
<div class="r" style="left:1280px;top:861px;width:45px;height:30px;background:#fff"></div>
<div class="c" style="left:1280px;top:861.5px;width:45px;height:30px;line-height:30px;text-align:left;padding-left:7.5px;">ES</div>
<div class="r" style="left:1326px;top:861px;width:57px;height:30px;background:#fff"></div>
<div class="c" style="left:1326px;top:861.5px;width:57px;height:30px;line-height:30px;text-align:right;padding-right:6.9px;">51,454</div>
<div class="r" style="left:1384px;top:861px;width:55px;height:30px;background:#fff"></div>
<div class="c" style="left:1384px;top:861.5px;width:55px;height:30px;line-height:30px;text-align:right;padding-right:6.9px;">3.58%</div>
<div class="r" style="left:1440px;top:861px;width:49px;height:30px;background:#fff"></div>
<div class="c" style="left:1440px;top:861.5px;width:49px;height:30px;line-height:30px;text-align:center;">0.016</div>
<div class="r" style="left:1490px;top:861px;width:56px;height:30px;background:#fff"></div>
<div class="c" style="left:1490px;top:861.5px;width:56px;height:30px;line-height:30px;text-align:right;padding-right:6.9px;">$0.81</div>
<div class="r" style="left:1280px;top:892px;width:45px;height:30px;background:#fff"></div>
<div class="c" style="left:1280px;top:892.5px;width:45px;height:30px;line-height:30px;text-align:left;padding-left:7.5px;">CN</div>
<div class="r" style="left:1326px;top:892px;width:57px;height:30px;background:#fff"></div>
<div class="c" style="left:1326px;top:892.5px;width:57px;height:30px;line-height:30px;text-align:right;padding-right:6.9px;">44,672</div>
<div class="r" style="left:1384px;top:892px;width:55px;height:30px;background:#fff"></div>
<div class="c" style="left:1384px;top:892.5px;width:55px;height:30px;line-height:30px;text-align:right;padding-right:6.9px;">3.10%</div>
<div class="r" style="left:1440px;top:892px;width:49px;height:30px;background:#fff"></div>
<div class="c" style="left:1440px;top:892.5px;width:49px;height:30px;line-height:30px;text-align:center;">0.012</div>
<div class="r" style="left:1490px;top:892px;width:56px;height:30px;background:#fff"></div>
<div class="c" style="left:1490px;top:892.5px;width:56px;height:30px;line-height:30px;text-align:right;padding-right:6.9px;">$0.54</div>
<div class="r" style="left:1280px;top:923px;width:266px;height:30px;background:#fff"></div>
<div class="c lnk" style="left:1280px;top:923.5px;width:266px;height:30px;line-height:30px;text-align:center;">Show more...</div>
<div class="r" style="left:1280px;top:954px;width:45px;height:30px;background:#fff"></div>
<div class="c b" style="left:1280px;top:954.5px;width:45px;height:30px;line-height:30px;text-align:left;padding-left:7.5px;">Total</div>
<div class="r" style="left:1326px;top:954px;width:113px;height:30px;background:#fff"></div>
<div class="c b" style="left:1326px;top:954.5px;width:113px;height:30px;line-height:30px;text-align:left;padding-left:7.5px;">1,439,173</div>
<div class="r" style="left:1440px;top:954px;width:49px;height:30px;background:#fff"></div>
<div class="c b" style="left:1440px;top:954.5px;width:49px;height:30px;line-height:30px;text-align:center;">0.014</div>
<div class="r" style="left:1490px;top:954px;width:56px;height:30px;background:#fff"></div>
<div class="c b" style="left:1490px;top:954.5px;width:56px;height:30px;line-height:30px;text-align:right;padding-right:6.9px;">$20.00</div>

<!-- right edge -->
<div class="abs" style="left:1884px;top:44px;width:1px;height:950px;background:#ffffff;z-index:40"></div>
<div class="abs" style="left:0;top:44px;width:1884px;height:1px;background:#efefef;z-index:39"></div>
<div class="abs" style="left:1885px;top:44px;width:1px;height:170px;background:repeating-linear-gradient(to bottom,#7d7d7d 0,#7d7d7d 1px,#000 1px,#000 2px,#7d7d7d 2px,#7d7d7d 4px);z-index:40"></div>
<div class="abs" style="left:1885px;top:214px;width:1px;height:780px;background:#000000;z-index:40"></div>
</body>
</html>
